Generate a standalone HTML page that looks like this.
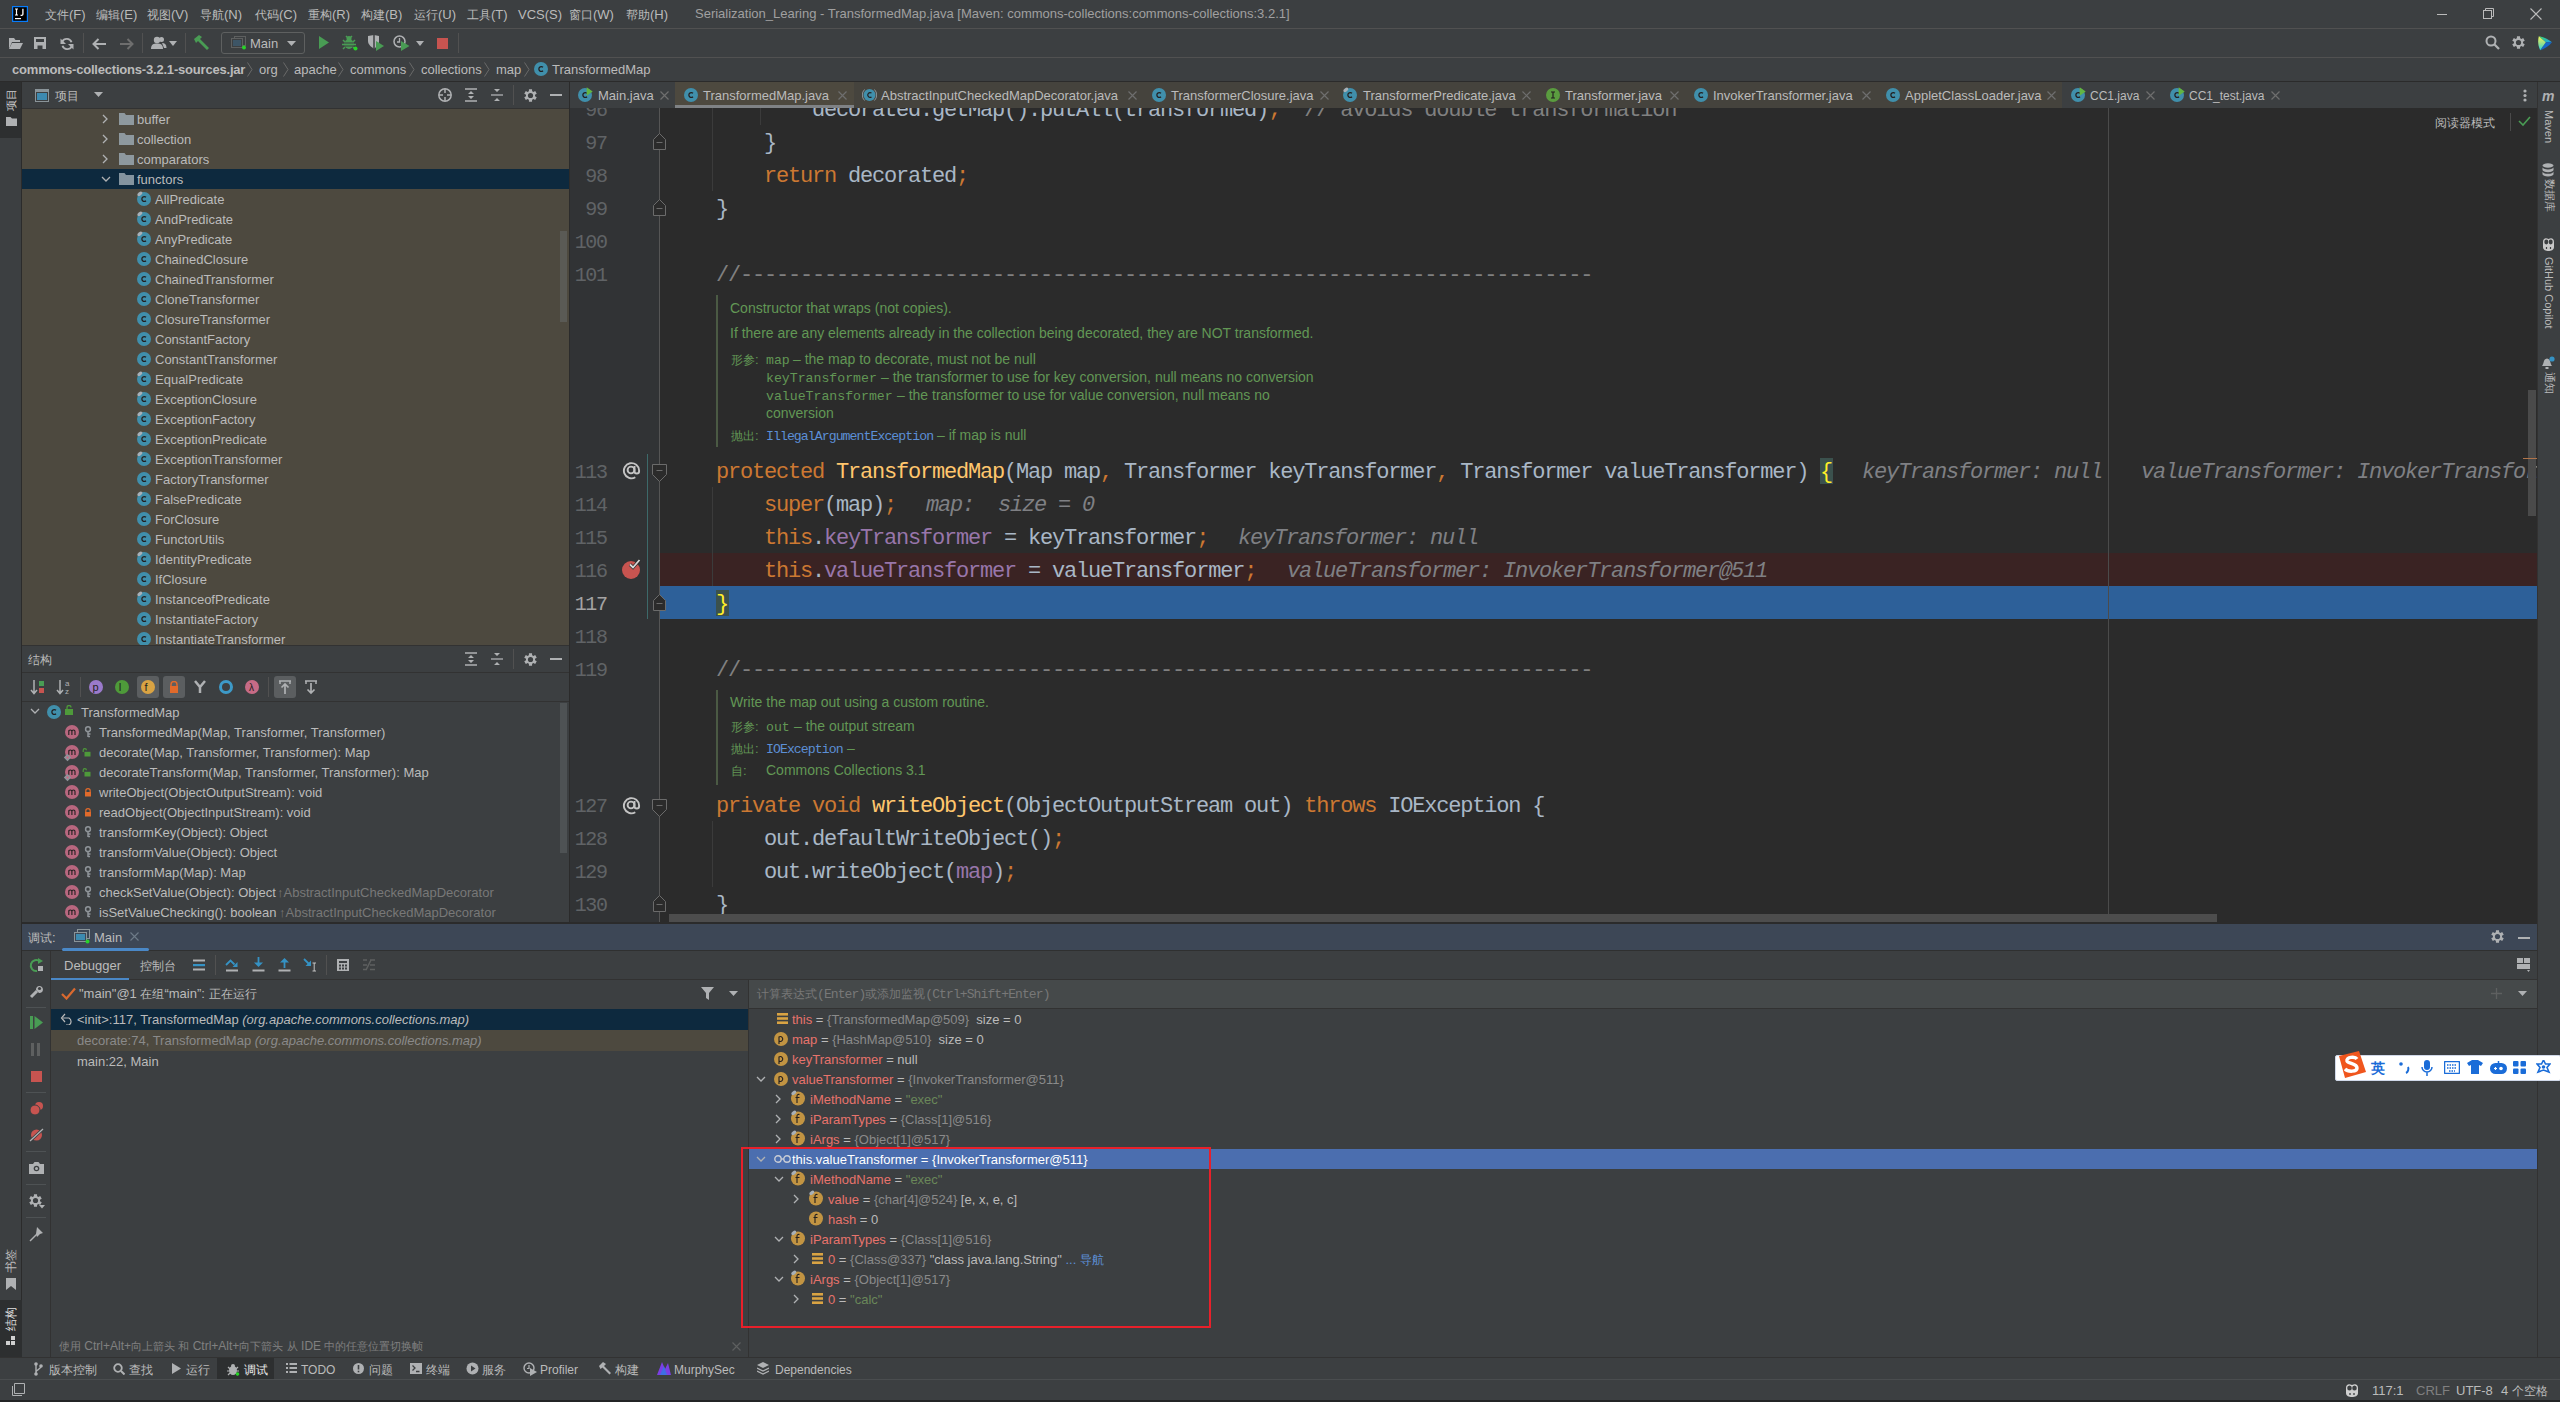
<!DOCTYPE html><html><head><meta charset="utf-8"><style>html,body{margin:0;padding:0;width:2560px;height:1402px;overflow:hidden;background:#3C3F41;}body>div,body>svg{position:absolute;}.t{white-space:pre;}</style></head><body><div style="left:0px;top:0px;width:2560px;height:28px;background:#3C3F41;"></div><div style="left:0px;top:28px;width:2560px;height:1px;background:#515151;"></div><svg style="left:12px;top:6px;" width="16" height="16" viewBox="0 0 16 16"><rect x="0.6" y="0.6" width="14.8" height="14.8" fill="#000" stroke="#087CFA" stroke-width="1.2"/><path d="M3 3H6M3 9H6M4.5 3V9" stroke="#FFF" stroke-width="1.2"/><path d="M8.6 9.2C9.6 9.6 10.9 9.3 10.9 8V2.8" fill="none" stroke="#FFF" stroke-width="1.3"/><rect x="3" y="12" width="6" height="1.2" fill="#FFF"/></svg><div class="t" style="left:45px;top:8.00px;font-size:13px;line-height:13px;color:#BBBBBB;font-family:'Liberation Sans', sans-serif;"><span style="font-size:0.923em">文件</span>(F)</div><div class="t" style="left:96px;top:8.00px;font-size:13px;line-height:13px;color:#BBBBBB;font-family:'Liberation Sans', sans-serif;"><span style="font-size:0.923em">编辑</span>(E)</div><div class="t" style="left:147px;top:8.00px;font-size:13px;line-height:13px;color:#BBBBBB;font-family:'Liberation Sans', sans-serif;"><span style="font-size:0.923em">视图</span>(V)</div><div class="t" style="left:200px;top:8.00px;font-size:13px;line-height:13px;color:#BBBBBB;font-family:'Liberation Sans', sans-serif;"><span style="font-size:0.923em">导航</span>(N)</div><div class="t" style="left:255px;top:8.00px;font-size:13px;line-height:13px;color:#BBBBBB;font-family:'Liberation Sans', sans-serif;"><span style="font-size:0.923em">代码</span>(C)</div><div class="t" style="left:308px;top:8.00px;font-size:13px;line-height:13px;color:#BBBBBB;font-family:'Liberation Sans', sans-serif;"><span style="font-size:0.923em">重构</span>(R)</div><div class="t" style="left:361px;top:8.00px;font-size:13px;line-height:13px;color:#BBBBBB;font-family:'Liberation Sans', sans-serif;"><span style="font-size:0.923em">构建</span>(B)</div><div class="t" style="left:414px;top:8.00px;font-size:13px;line-height:13px;color:#BBBBBB;font-family:'Liberation Sans', sans-serif;"><span style="font-size:0.923em">运行</span>(U)</div><div class="t" style="left:467px;top:8.00px;font-size:13px;line-height:13px;color:#BBBBBB;font-family:'Liberation Sans', sans-serif;"><span style="font-size:0.923em">工具</span>(T)</div><div class="t" style="left:518px;top:8.00px;font-size:13px;line-height:13px;color:#BBBBBB;font-family:'Liberation Sans', sans-serif;">VCS(S)</div><div class="t" style="left:569px;top:8.00px;font-size:13px;line-height:13px;color:#BBBBBB;font-family:'Liberation Sans', sans-serif;"><span style="font-size:0.923em">窗口</span>(W)</div><div class="t" style="left:626px;top:8.00px;font-size:13px;line-height:13px;color:#BBBBBB;font-family:'Liberation Sans', sans-serif;"><span style="font-size:0.923em">帮助</span>(H)</div><div class="t" style="left:695px;top:7.00px;font-size:13px;line-height:13px;color:#A0A0A0;font-family:'Liberation Sans', sans-serif;">Serialization_Learing - TransformedMap.java [Maven: commons-collections:commons-collections:3.2.1]</div><div style="left:2437px;top:14px;width:10px;height:1px;background:#BBBBBB;"></div><svg style="left:2483px;top:8px;" width="12" height="12" viewBox="0 0 12 12"><rect x="0.5" y="2.5" width="8" height="8" fill="none" stroke="#BBBBBB"/><path d="M2.5 2.5V0.5H10.5V8.5H8.5" fill="none" stroke="#BBBBBB"/></svg><svg style="left:2530px;top:8px;" width="12" height="12" viewBox="0 0 12 12"><path d="M0.5 0.5L11.5 11.5M11.5 0.5L0.5 11.5" stroke="#BBBBBB" stroke-width="1.1"/></svg><div style="left:0px;top:29px;width:2560px;height:28px;background:#3C3F41;"></div><div style="left:0px;top:57px;width:2560px;height:1px;background:#515151;"></div><svg style="left:8px;top:37px;" width="16" height="13" viewBox="0 0 16 13"><path d="M1 1H6L7.5 3H12V5H4L1 12Z" fill="#AFB1B3"/><path d="M4 6H15L12 12H1Z" fill="#AFB1B3"/></svg><svg style="left:34px;top:37px;" width="13" height="13" viewBox="0 0 13 13"><path d="M0 0H12V12H0Z M2 2V5H10V2Z M3.5 8.5V12H8.5V8.5Z" fill="#AFB1B3" fill-rule="evenodd"/></svg><svg style="left:60px;top:37px;" width="14" height="14" viewBox="0 0 14 14"><path d="M11.5 5.2A5 5 0 0 0 2.3 4.6" fill="none" stroke="#AFB1B3" stroke-width="1.9"/><path d="M2.5 8.8A5 5 0 0 0 11.7 9.4" fill="none" stroke="#AFB1B3" stroke-width="1.9"/><path d="M0.5 1.5V7H6Z" fill="#AFB1B3"/><path d="M13.5 12.5V7H8Z" fill="#AFB1B3"/></svg><div style="left:83px;top:33px;width:1px;height:20px;background:#515151;"></div><svg style="left:92px;top:38px;" width="15" height="12" viewBox="0 0 15 12"><path d="M1.5 6H14M6.5 1L1.5 6L6.5 11" fill="none" stroke="#AFB1B3" stroke-width="2"/></svg><svg style="left:119px;top:38px;" width="15" height="12" viewBox="0 0 15 12"><path d="M13.5 6H1M8.5 1L13.5 6L8.5 11" fill="none" stroke="#6E6E6E" stroke-width="2"/></svg><div style="left:142px;top:33px;width:1px;height:20px;background:#515151;"></div><svg style="left:151px;top:36px;" width="16" height="14" viewBox="0 0 16 14"><circle cx="6" cy="4" r="3.2" fill="#AFB1B3"/><path d="M0 13C0 8.5 2.5 7.5 6 7.5C9.5 7.5 12 8.5 12 13Z" fill="#AFB1B3"/><circle cx="10.5" cy="3.5" r="2.5" fill="#AFB1B3"/><path d="M11 7C14 7 15.5 8.5 15.5 12L13 12Z" fill="#AFB1B3"/></svg><svg style="left:169px;top:41px;" width="8" height="5" viewBox="0 0 8 5"><path d="M0 0H8L4 5Z" fill="#AFB1B3"/></svg><div style="left:185px;top:33px;width:1px;height:20px;background:#515151;"></div><svg style="left:193px;top:35px;" width="17" height="15" viewBox="0 0 17 15"><path d="M1 4L6 0L9 2L7 4L16 13L14 15L5 6L3 8Z" fill="#499C54"/></svg><div style="left:221px;top:32px;width:82px;height:20px;border:1px solid #5E6060;border-radius:3px;"></div><svg style="left:231px;top:36px;" width="16" height="14" viewBox="0 0 16 14"><rect x="3.5" y="0.5" width="11" height="9" fill="none" stroke="#5E6060"/><rect x="0.5" y="2.5" width="11" height="9" fill="#3C3F41" stroke="#5E6060"/><rect x="2" y="4" width="8" height="6" fill="#3D5566"/><circle cx="13" cy="11.5" r="2" fill="#28D228"/></svg><div class="t" style="left:250px;top:37.00px;font-size:13px;line-height:13px;color:#BBBBBB;font-family:'Liberation Sans', sans-serif;">Main</div><svg style="left:287px;top:41px;" width="9" height="5" viewBox="0 0 9 5"><path d="M0 0H9L4.5 5Z" fill="#AFB1B3"/></svg><svg style="left:319px;top:36px;" width="10" height="13" viewBox="0 0 10 13"><path d="M0 0L10 6.5L0 13Z" fill="#499C54"/></svg><svg style="left:342px;top:35px;" width="16" height="16" viewBox="0 0 16 16"><ellipse cx="7" cy="9" rx="4.5" ry="5" fill="#499C54"/><circle cx="7" cy="3.5" r="2.5" fill="#499C54"/><path d="M1 5L3 7M13 5L11 7M0 9.5H3M11 9.5H14M1 14L3 12M13 14L11 12M4 1L5.5 2.5M10 1L8.5 2.5" stroke="#499C54" stroke-width="1.5"/><path d="M3 8H11M3 11H11" stroke="#3C3F41" stroke-width="1"/><circle cx="13.5" cy="13.5" r="2" fill="#28D228"/></svg><svg style="left:367px;top:35px;" width="17" height="16" viewBox="0 0 17 16"><path d="M1 1L7 0L12 1V6C12 10 9 12.5 7 13.5C5 12.5 1 10 1 6Z" fill="#AFB1B3"/><path d="M7 0V13.5" stroke="#3C3F41" stroke-width="1.5"/><path d="M9 6L17 11L9 16Z" fill="#499C54"/></svg><svg style="left:393px;top:35px;" width="17" height="16" viewBox="0 0 17 16"><circle cx="6.5" cy="6.5" r="5.5" fill="none" stroke="#AFB1B3" stroke-width="1.5"/><path d="M6.5 3V7H4" fill="none" stroke="#AFB1B3" stroke-width="1.3"/><path d="M8 6L16.5 11L8 16Z" fill="#499C54"/></svg><svg style="left:416px;top:41px;" width="8" height="5" viewBox="0 0 8 5"><path d="M0 0H8L4 5Z" fill="#AFB1B3"/></svg><div style="left:437px;top:38px;width:11px;height:11px;background:#C75450;"></div><div style="left:458px;top:33px;width:1px;height:20px;background:#515151;"></div><svg style="left:2485px;top:35px;" width="16" height="16" viewBox="0 0 16 16"><circle cx="6" cy="6" r="4.5" fill="none" stroke="#AFB1B3" stroke-width="2"/><path d="M9.5 9.5L14 14" stroke="#AFB1B3" stroke-width="2.3"/></svg><svg style="left:2512px;top:36px;" width="13" height="13" viewBox="0 0 13 13"><path d="M8.10 10.76 L8.05 12.81 L4.95 12.81 L4.90 10.76 L3.61 10.02 L1.80 10.99 L0.26 8.32 L2.01 7.24 L2.01 5.76 L0.26 4.68 L1.80 2.01 L3.61 2.98 L4.90 2.24 L4.95 0.19 L8.05 0.19 L8.10 2.24 L9.39 2.98 L11.20 2.01 L12.74 4.68 L10.99 5.76 L10.99 7.24 L12.74 8.32 L11.20 10.99 L9.39 10.02Z" fill="#AFB1B3"/><circle cx="6.5" cy="6.5" r="4.03" fill="#AFB1B3"/><circle cx="6.5" cy="6.5" r="2.60" fill="#3C3F41"/></svg><svg style="left:2538px;top:36px;" width="15" height="15" viewBox="0 0 15 15"><defs><linearGradient id="jbl" x1="0" y1="0" x2="0" y2="1"><stop offset="0" stop-color="#F4F65A"/><stop offset="0.5" stop-color="#9BE28A"/><stop offset="1" stop-color="#27D3E0"/></linearGradient><linearGradient id="jbt" x1="0" y1="0" x2="1" y2="1"><stop offset="0" stop-color="#3DDC6A"/><stop offset="1" stop-color="#1A9AE8"/></linearGradient></defs><path d="M0.8 0.3C5 0.8 10 3 14 6.3L7.8 6.3Z" fill="url(#jbt)"/><path d="M7.8 6.3L14 6.3C11 10 6 13 2.2 14.2Z" fill="#1668C8"/><path d="M0.8 0.3L7.8 6.3L2.2 14.2C0 10 -0.3 5 0.8 0.3Z" fill="url(#jbl)"/></svg><div style="left:0px;top:58px;width:2560px;height:23px;background:#3C3F41;"></div><div style="left:0px;top:81px;width:2560px;height:1px;background:#2B2B2B;"></div><div class="t" style="left:12px;top:63.00px;font-size:13px;line-height:13px;color:#BBBBBB;font-family:'Liberation Sans', sans-serif;font-weight:bold;letter-spacing:-0.2px;">commons-collections-3.2.1-sources.jar</div><svg style="left:247px;top:62px;" width="6" height="15" viewBox="0 0 6 15"><path d="M0.5 0.5L5 7.5L0.5 14.5" fill="none" stroke="#6A6A6A"/></svg><div class="t" style="left:259px;top:63.00px;font-size:13px;line-height:13px;color:#BBBBBB;font-family:'Liberation Sans', sans-serif;">org</div><div class="t" style="left:294px;top:63.00px;font-size:13px;line-height:13px;color:#BBBBBB;font-family:'Liberation Sans', sans-serif;">apache</div><div class="t" style="left:350px;top:63.00px;font-size:13px;line-height:13px;color:#BBBBBB;font-family:'Liberation Sans', sans-serif;">commons</div><div class="t" style="left:421px;top:63.00px;font-size:13px;line-height:13px;color:#BBBBBB;font-family:'Liberation Sans', sans-serif;">collections</div><div class="t" style="left:496px;top:63.00px;font-size:13px;line-height:13px;color:#BBBBBB;font-family:'Liberation Sans', sans-serif;">map</div><svg style="left:283px;top:62px;" width="6" height="15" viewBox="0 0 6 15"><path d="M0.5 0.5L5 7.5L0.5 14.5" fill="none" stroke="#6A6A6A"/></svg><svg style="left:338px;top:62px;" width="6" height="15" viewBox="0 0 6 15"><path d="M0.5 0.5L5 7.5L0.5 14.5" fill="none" stroke="#6A6A6A"/></svg><svg style="left:409px;top:62px;" width="6" height="15" viewBox="0 0 6 15"><path d="M0.5 0.5L5 7.5L0.5 14.5" fill="none" stroke="#6A6A6A"/></svg><svg style="left:484px;top:62px;" width="6" height="15" viewBox="0 0 6 15"><path d="M0.5 0.5L5 7.5L0.5 14.5" fill="none" stroke="#6A6A6A"/></svg><svg style="left:524px;top:62px;" width="6" height="15" viewBox="0 0 6 15"><path d="M0.5 0.5L5 7.5L0.5 14.5" fill="none" stroke="#6A6A6A"/></svg><svg style="left:534px;top:62px;overflow:visible;" width="16" height="14" viewBox="0 0 16 14"><circle cx="7.0" cy="7.0" r="7.0" fill="#408FAB"/><path d="M8.96 5.32A2.38 2.38 0 1 0 8.96 8.68" fill="none" stroke="#231F20" stroke-width="1.3"/></svg><div class="t" style="left:552px;top:63.00px;font-size:13px;line-height:13px;color:#BBBBBB;font-family:'Liberation Sans', sans-serif;">TransformedMap</div><div style="left:0px;top:82px;width:22px;height:1300px;background:#3C3F41;"></div><div style="left:21px;top:82px;width:1px;height:1276px;background:#2B2B2B;"></div><div style="left:0px;top:82px;width:21px;height:56px;background:#2D2F30;"></div><div class="t" style="left:4px;top:-10.16px;font-size:12px;line-height:12px;color:#D0D0D0;font-family:'Liberation Sans', sans-serif;transform:rotate(-90deg);transform-origin:0 0;top:111px;left:5px;"><span style="font-size:0.923em">项目</span></div><svg style="left:6px;top:117px;" width="12" height="9" viewBox="0 0 12 9"><path d="M0 0H4.5L6 1.5H11V9H0Z" fill="#AFB1B3"/></svg><div style="left:22px;top:82px;width:547px;height:26px;background:#3C3F41;"></div><div style="left:22px;top:108px;width:547px;height:1px;background:#323232;"></div><svg style="left:35px;top:89px;" width="14" height="13" viewBox="0 0 14 13"><rect x="0.5" y="0.5" width="13" height="12" fill="none" stroke="#8A9499"/><rect x="0" y="0" width="14" height="3" fill="#8A9499"/><rect x="2" y="4" width="10" height="7" fill="#3D8AB0"/></svg><div class="t" style="left:55px;top:89.00px;font-size:13px;line-height:13px;color:#BBBBBB;font-family:'Liberation Sans', sans-serif;"><span style="font-size:0.923em">项目</span></div><svg style="left:94px;top:92px;" width="9" height="6" viewBox="0 0 9 6"><path d="M0 0H9L4.5 5Z" fill="#AFB1B3"/></svg><svg style="left:438px;top:88px;" width="14" height="14" viewBox="0 0 14 14"><circle cx="7" cy="7" r="6.2" fill="none" stroke="#AFB1B3" stroke-width="1.5"/><path d="M7 1V5M7 9V13M1 7H5M9 7H13" stroke="#AFB1B3" stroke-width="1.5"/></svg><svg style="left:465px;top:88px;" width="13" height="14" viewBox="0 0 13 14"><path d="M0 1H12M0 13H12" stroke="#AFB1B3" stroke-width="1.3"/><path d="M3 6L6 3L9 6Z M3 8L6 11L9 8Z" fill="#AFB1B3"/></svg><svg style="left:491px;top:88px;" width="13" height="14" viewBox="0 0 13 14"><path d="M0 7H12" stroke="#AFB1B3" stroke-width="1.3"/><path d="M3 1H9L6 4Z M3 13H9L6 10Z" fill="#AFB1B3"/></svg><div style="left:513px;top:85px;width:1px;height:20px;background:#515151;"></div><svg style="left:524px;top:89px;" width="13" height="13" viewBox="0 0 13 13"><path d="M8.10 10.76 L8.05 12.81 L4.95 12.81 L4.90 10.76 L3.61 10.02 L1.80 10.99 L0.26 8.32 L2.01 7.24 L2.01 5.76 L0.26 4.68 L1.80 2.01 L3.61 2.98 L4.90 2.24 L4.95 0.19 L8.05 0.19 L8.10 2.24 L9.39 2.98 L11.20 2.01 L12.74 4.68 L10.99 5.76 L10.99 7.24 L12.74 8.32 L11.20 10.99 L9.39 10.02Z" fill="#AFB1B3"/><circle cx="6.5" cy="6.5" r="4.03" fill="#AFB1B3"/><circle cx="6.5" cy="6.5" r="2.60" fill="#3C3F41"/></svg><div style="left:550px;top:94px;width:12px;height:2px;background:#AFB1B3;"></div><div style="left:569px;top:82px;width:1px;height:841px;background:#2B2B2B;"></div><div style="left:22px;top:109px;width:547px;height:536px;background:#4D493F;"></div><svg style="left:102px;top:114px;" width="7" height="10" viewBox="0 0 7 10"><path d="M1 1L5 5L1 9" fill="none" stroke="#AFB1B3" stroke-width="1.3"/></svg><svg style="left:119px;top:113px;" width="15" height="12" viewBox="0 0 15 12"><path d="M0 0H5.5L7 2H15V12H0Z" fill="#9AA7B0" opacity="0.85"/></svg><div class="t" style="left:137px;top:113.00px;font-size:13px;line-height:13px;color:#BBBBBB;font-family:'Liberation Sans', sans-serif;">buffer</div><svg style="left:102px;top:134px;" width="7" height="10" viewBox="0 0 7 10"><path d="M1 1L5 5L1 9" fill="none" stroke="#AFB1B3" stroke-width="1.3"/></svg><svg style="left:119px;top:133px;" width="15" height="12" viewBox="0 0 15 12"><path d="M0 0H5.5L7 2H15V12H0Z" fill="#9AA7B0" opacity="0.85"/></svg><div class="t" style="left:137px;top:133.00px;font-size:13px;line-height:13px;color:#BBBBBB;font-family:'Liberation Sans', sans-serif;">collection</div><svg style="left:102px;top:154px;" width="7" height="10" viewBox="0 0 7 10"><path d="M1 1L5 5L1 9" fill="none" stroke="#AFB1B3" stroke-width="1.3"/></svg><svg style="left:119px;top:153px;" width="15" height="12" viewBox="0 0 15 12"><path d="M0 0H5.5L7 2H15V12H0Z" fill="#9AA7B0" opacity="0.85"/></svg><div class="t" style="left:137px;top:153.00px;font-size:13px;line-height:13px;color:#BBBBBB;font-family:'Liberation Sans', sans-serif;">comparators</div><div style="left:22px;top:169px;width:547px;height:20px;background:#0D293E;"></div><svg style="left:101px;top:176px;" width="10" height="7" viewBox="0 0 10 7"><path d="M1 1L5 5L9 1" fill="none" stroke="#AFB1B3" stroke-width="1.3"/></svg><svg style="left:119px;top:173px;" width="15" height="12" viewBox="0 0 15 12"><path d="M0 0H5.5L7 2H15V12H0Z" fill="#9AA7B0" opacity="0.85"/></svg><div class="t" style="left:137px;top:173.00px;font-size:13px;line-height:13px;color:#BBBBBB;font-family:'Liberation Sans', sans-serif;">functors</div><div style="left:22px;top:109px;width:547px;height:536px;overflow:hidden;"><svg style="position:absolute;left:115px;top:83px;overflow:visible;" width="16" height="14" viewBox="0 0 16 14"><circle cx="7.0" cy="7.0" r="7.0" fill="#408FAB"/><path d="M8.96 5.32A2.38 2.38 0 1 0 8.96 8.68" fill="none" stroke="#231F20" stroke-width="1.3"/><ellipse cx="2.80" cy="1.82" rx="2.80" ry="1.68" transform="rotate(-35 2.80 1.82)" fill="#A7B0B8"/></svg><div class="t" style="position:absolute;left:133px;top:84.00px;font-size:13px;line-height:13px;color:#BBBBBB;font-family:'Liberation Sans',sans-serif;">AllPredicate</div><svg style="position:absolute;left:115px;top:103px;overflow:visible;" width="16" height="14" viewBox="0 0 16 14"><circle cx="7.0" cy="7.0" r="7.0" fill="#408FAB"/><path d="M8.96 5.32A2.38 2.38 0 1 0 8.96 8.68" fill="none" stroke="#231F20" stroke-width="1.3"/><ellipse cx="2.80" cy="1.82" rx="2.80" ry="1.68" transform="rotate(-35 2.80 1.82)" fill="#A7B0B8"/></svg><div class="t" style="position:absolute;left:133px;top:104.00px;font-size:13px;line-height:13px;color:#BBBBBB;font-family:'Liberation Sans',sans-serif;">AndPredicate</div><svg style="position:absolute;left:115px;top:123px;overflow:visible;" width="16" height="14" viewBox="0 0 16 14"><circle cx="7.0" cy="7.0" r="7.0" fill="#408FAB"/><path d="M8.96 5.32A2.38 2.38 0 1 0 8.96 8.68" fill="none" stroke="#231F20" stroke-width="1.3"/><ellipse cx="2.80" cy="1.82" rx="2.80" ry="1.68" transform="rotate(-35 2.80 1.82)" fill="#A7B0B8"/></svg><div class="t" style="position:absolute;left:133px;top:124.00px;font-size:13px;line-height:13px;color:#BBBBBB;font-family:'Liberation Sans',sans-serif;">AnyPredicate</div><svg style="position:absolute;left:115px;top:143px;overflow:visible;" width="16" height="14" viewBox="0 0 16 14"><circle cx="7.0" cy="7.0" r="7.0" fill="#408FAB"/><path d="M8.96 5.32A2.38 2.38 0 1 0 8.96 8.68" fill="none" stroke="#231F20" stroke-width="1.3"/></svg><div class="t" style="position:absolute;left:133px;top:144.00px;font-size:13px;line-height:13px;color:#BBBBBB;font-family:'Liberation Sans',sans-serif;">ChainedClosure</div><svg style="position:absolute;left:115px;top:163px;overflow:visible;" width="16" height="14" viewBox="0 0 16 14"><circle cx="7.0" cy="7.0" r="7.0" fill="#408FAB"/><path d="M8.96 5.32A2.38 2.38 0 1 0 8.96 8.68" fill="none" stroke="#231F20" stroke-width="1.3"/></svg><div class="t" style="position:absolute;left:133px;top:164.00px;font-size:13px;line-height:13px;color:#BBBBBB;font-family:'Liberation Sans',sans-serif;">ChainedTransformer</div><svg style="position:absolute;left:115px;top:183px;overflow:visible;" width="16" height="14" viewBox="0 0 16 14"><circle cx="7.0" cy="7.0" r="7.0" fill="#408FAB"/><path d="M8.96 5.32A2.38 2.38 0 1 0 8.96 8.68" fill="none" stroke="#231F20" stroke-width="1.3"/></svg><div class="t" style="position:absolute;left:133px;top:184.00px;font-size:13px;line-height:13px;color:#BBBBBB;font-family:'Liberation Sans',sans-serif;">CloneTransformer</div><svg style="position:absolute;left:115px;top:203px;overflow:visible;" width="16" height="14" viewBox="0 0 16 14"><circle cx="7.0" cy="7.0" r="7.0" fill="#408FAB"/><path d="M8.96 5.32A2.38 2.38 0 1 0 8.96 8.68" fill="none" stroke="#231F20" stroke-width="1.3"/></svg><div class="t" style="position:absolute;left:133px;top:204.00px;font-size:13px;line-height:13px;color:#BBBBBB;font-family:'Liberation Sans',sans-serif;">ClosureTransformer</div><svg style="position:absolute;left:115px;top:223px;overflow:visible;" width="16" height="14" viewBox="0 0 16 14"><circle cx="7.0" cy="7.0" r="7.0" fill="#408FAB"/><path d="M8.96 5.32A2.38 2.38 0 1 0 8.96 8.68" fill="none" stroke="#231F20" stroke-width="1.3"/></svg><div class="t" style="position:absolute;left:133px;top:224.00px;font-size:13px;line-height:13px;color:#BBBBBB;font-family:'Liberation Sans',sans-serif;">ConstantFactory</div><svg style="position:absolute;left:115px;top:243px;overflow:visible;" width="16" height="14" viewBox="0 0 16 14"><circle cx="7.0" cy="7.0" r="7.0" fill="#408FAB"/><path d="M8.96 5.32A2.38 2.38 0 1 0 8.96 8.68" fill="none" stroke="#231F20" stroke-width="1.3"/></svg><div class="t" style="position:absolute;left:133px;top:244.00px;font-size:13px;line-height:13px;color:#BBBBBB;font-family:'Liberation Sans',sans-serif;">ConstantTransformer</div><svg style="position:absolute;left:115px;top:263px;overflow:visible;" width="16" height="14" viewBox="0 0 16 14"><circle cx="7.0" cy="7.0" r="7.0" fill="#408FAB"/><path d="M8.96 5.32A2.38 2.38 0 1 0 8.96 8.68" fill="none" stroke="#231F20" stroke-width="1.3"/><ellipse cx="2.80" cy="1.82" rx="2.80" ry="1.68" transform="rotate(-35 2.80 1.82)" fill="#A7B0B8"/></svg><div class="t" style="position:absolute;left:133px;top:264.00px;font-size:13px;line-height:13px;color:#BBBBBB;font-family:'Liberation Sans',sans-serif;">EqualPredicate</div><svg style="position:absolute;left:115px;top:283px;overflow:visible;" width="16" height="14" viewBox="0 0 16 14"><circle cx="7.0" cy="7.0" r="7.0" fill="#408FAB"/><path d="M8.96 5.32A2.38 2.38 0 1 0 8.96 8.68" fill="none" stroke="#231F20" stroke-width="1.3"/><ellipse cx="2.80" cy="1.82" rx="2.80" ry="1.68" transform="rotate(-35 2.80 1.82)" fill="#A7B0B8"/></svg><div class="t" style="position:absolute;left:133px;top:284.00px;font-size:13px;line-height:13px;color:#BBBBBB;font-family:'Liberation Sans',sans-serif;">ExceptionClosure</div><svg style="position:absolute;left:115px;top:303px;overflow:visible;" width="16" height="14" viewBox="0 0 16 14"><circle cx="7.0" cy="7.0" r="7.0" fill="#408FAB"/><path d="M8.96 5.32A2.38 2.38 0 1 0 8.96 8.68" fill="none" stroke="#231F20" stroke-width="1.3"/><ellipse cx="2.80" cy="1.82" rx="2.80" ry="1.68" transform="rotate(-35 2.80 1.82)" fill="#A7B0B8"/></svg><div class="t" style="position:absolute;left:133px;top:304.00px;font-size:13px;line-height:13px;color:#BBBBBB;font-family:'Liberation Sans',sans-serif;">ExceptionFactory</div><svg style="position:absolute;left:115px;top:323px;overflow:visible;" width="16" height="14" viewBox="0 0 16 14"><circle cx="7.0" cy="7.0" r="7.0" fill="#408FAB"/><path d="M8.96 5.32A2.38 2.38 0 1 0 8.96 8.68" fill="none" stroke="#231F20" stroke-width="1.3"/><ellipse cx="2.80" cy="1.82" rx="2.80" ry="1.68" transform="rotate(-35 2.80 1.82)" fill="#A7B0B8"/></svg><div class="t" style="position:absolute;left:133px;top:324.00px;font-size:13px;line-height:13px;color:#BBBBBB;font-family:'Liberation Sans',sans-serif;">ExceptionPredicate</div><svg style="position:absolute;left:115px;top:343px;overflow:visible;" width="16" height="14" viewBox="0 0 16 14"><circle cx="7.0" cy="7.0" r="7.0" fill="#408FAB"/><path d="M8.96 5.32A2.38 2.38 0 1 0 8.96 8.68" fill="none" stroke="#231F20" stroke-width="1.3"/><ellipse cx="2.80" cy="1.82" rx="2.80" ry="1.68" transform="rotate(-35 2.80 1.82)" fill="#A7B0B8"/></svg><div class="t" style="position:absolute;left:133px;top:344.00px;font-size:13px;line-height:13px;color:#BBBBBB;font-family:'Liberation Sans',sans-serif;">ExceptionTransformer</div><svg style="position:absolute;left:115px;top:363px;overflow:visible;" width="16" height="14" viewBox="0 0 16 14"><circle cx="7.0" cy="7.0" r="7.0" fill="#408FAB"/><path d="M8.96 5.32A2.38 2.38 0 1 0 8.96 8.68" fill="none" stroke="#231F20" stroke-width="1.3"/></svg><div class="t" style="position:absolute;left:133px;top:364.00px;font-size:13px;line-height:13px;color:#BBBBBB;font-family:'Liberation Sans',sans-serif;">FactoryTransformer</div><svg style="position:absolute;left:115px;top:383px;overflow:visible;" width="16" height="14" viewBox="0 0 16 14"><circle cx="7.0" cy="7.0" r="7.0" fill="#408FAB"/><path d="M8.96 5.32A2.38 2.38 0 1 0 8.96 8.68" fill="none" stroke="#231F20" stroke-width="1.3"/><ellipse cx="2.80" cy="1.82" rx="2.80" ry="1.68" transform="rotate(-35 2.80 1.82)" fill="#A7B0B8"/></svg><div class="t" style="position:absolute;left:133px;top:384.00px;font-size:13px;line-height:13px;color:#BBBBBB;font-family:'Liberation Sans',sans-serif;">FalsePredicate</div><svg style="position:absolute;left:115px;top:403px;overflow:visible;" width="16" height="14" viewBox="0 0 16 14"><circle cx="7.0" cy="7.0" r="7.0" fill="#408FAB"/><path d="M8.96 5.32A2.38 2.38 0 1 0 8.96 8.68" fill="none" stroke="#231F20" stroke-width="1.3"/></svg><div class="t" style="position:absolute;left:133px;top:404.00px;font-size:13px;line-height:13px;color:#BBBBBB;font-family:'Liberation Sans',sans-serif;">ForClosure</div><svg style="position:absolute;left:115px;top:423px;overflow:visible;" width="16" height="14" viewBox="0 0 16 14"><circle cx="7.0" cy="7.0" r="7.0" fill="#408FAB"/><path d="M8.96 5.32A2.38 2.38 0 1 0 8.96 8.68" fill="none" stroke="#231F20" stroke-width="1.3"/></svg><div class="t" style="position:absolute;left:133px;top:424.00px;font-size:13px;line-height:13px;color:#BBBBBB;font-family:'Liberation Sans',sans-serif;">FunctorUtils</div><svg style="position:absolute;left:115px;top:443px;overflow:visible;" width="16" height="14" viewBox="0 0 16 14"><circle cx="7.0" cy="7.0" r="7.0" fill="#408FAB"/><path d="M8.96 5.32A2.38 2.38 0 1 0 8.96 8.68" fill="none" stroke="#231F20" stroke-width="1.3"/><ellipse cx="2.80" cy="1.82" rx="2.80" ry="1.68" transform="rotate(-35 2.80 1.82)" fill="#A7B0B8"/></svg><div class="t" style="position:absolute;left:133px;top:444.00px;font-size:13px;line-height:13px;color:#BBBBBB;font-family:'Liberation Sans',sans-serif;">IdentityPredicate</div><svg style="position:absolute;left:115px;top:463px;overflow:visible;" width="16" height="14" viewBox="0 0 16 14"><circle cx="7.0" cy="7.0" r="7.0" fill="#408FAB"/><path d="M8.96 5.32A2.38 2.38 0 1 0 8.96 8.68" fill="none" stroke="#231F20" stroke-width="1.3"/></svg><div class="t" style="position:absolute;left:133px;top:464.00px;font-size:13px;line-height:13px;color:#BBBBBB;font-family:'Liberation Sans',sans-serif;">IfClosure</div><svg style="position:absolute;left:115px;top:483px;overflow:visible;" width="16" height="14" viewBox="0 0 16 14"><circle cx="7.0" cy="7.0" r="7.0" fill="#408FAB"/><path d="M8.96 5.32A2.38 2.38 0 1 0 8.96 8.68" fill="none" stroke="#231F20" stroke-width="1.3"/><ellipse cx="2.80" cy="1.82" rx="2.80" ry="1.68" transform="rotate(-35 2.80 1.82)" fill="#A7B0B8"/></svg><div class="t" style="position:absolute;left:133px;top:484.00px;font-size:13px;line-height:13px;color:#BBBBBB;font-family:'Liberation Sans',sans-serif;">InstanceofPredicate</div><svg style="position:absolute;left:115px;top:503px;overflow:visible;" width="16" height="14" viewBox="0 0 16 14"><circle cx="7.0" cy="7.0" r="7.0" fill="#408FAB"/><path d="M8.96 5.32A2.38 2.38 0 1 0 8.96 8.68" fill="none" stroke="#231F20" stroke-width="1.3"/></svg><div class="t" style="position:absolute;left:133px;top:504.00px;font-size:13px;line-height:13px;color:#BBBBBB;font-family:'Liberation Sans',sans-serif;">InstantiateFactory</div><svg style="position:absolute;left:115px;top:523px;overflow:visible;" width="16" height="14" viewBox="0 0 16 14"><circle cx="7.0" cy="7.0" r="7.0" fill="#408FAB"/><path d="M8.96 5.32A2.38 2.38 0 1 0 8.96 8.68" fill="none" stroke="#231F20" stroke-width="1.3"/></svg><div class="t" style="position:absolute;left:133px;top:524.00px;font-size:13px;line-height:13px;color:#BBBBBB;font-family:'Liberation Sans',sans-serif;">InstantiateTransformer</div></div><div style="left:560px;top:231px;width:7px;height:91px;background:#5A5A55;border-radius:0;"></div><div style="left:22px;top:645px;width:547px;height:27px;background:#3C3F41;"></div><div style="left:22px;top:645px;width:547px;height:1px;background:#323232;"></div><div class="t" style="left:28px;top:653.00px;font-size:13px;line-height:13px;color:#BBBBBB;font-family:'Liberation Sans', sans-serif;"><span style="font-size:0.923em">结构</span></div><svg style="left:465px;top:652px;" width="13" height="14" viewBox="0 0 13 14"><path d="M0 1H12M0 13H12" stroke="#AFB1B3" stroke-width="1.3"/><path d="M3 6L6 3L9 6Z M3 8L6 11L9 8Z" fill="#AFB1B3"/></svg><svg style="left:491px;top:652px;" width="13" height="14" viewBox="0 0 13 14"><path d="M0 7H12" stroke="#AFB1B3" stroke-width="1.3"/><path d="M3 1H9L6 4Z M3 13H9L6 10Z" fill="#AFB1B3"/></svg><div style="left:513px;top:649px;width:1px;height:20px;background:#515151;"></div><svg style="left:524px;top:653px;" width="13" height="13" viewBox="0 0 13 13"><path d="M8.10 10.76 L8.05 12.81 L4.95 12.81 L4.90 10.76 L3.61 10.02 L1.80 10.99 L0.26 8.32 L2.01 7.24 L2.01 5.76 L0.26 4.68 L1.80 2.01 L3.61 2.98 L4.90 2.24 L4.95 0.19 L8.05 0.19 L8.10 2.24 L9.39 2.98 L11.20 2.01 L12.74 4.68 L10.99 5.76 L10.99 7.24 L12.74 8.32 L11.20 10.99 L9.39 10.02Z" fill="#AFB1B3"/><circle cx="6.5" cy="6.5" r="4.03" fill="#AFB1B3"/><circle cx="6.5" cy="6.5" r="2.60" fill="#3C3F41"/></svg><div style="left:550px;top:658px;width:12px;height:2px;background:#AFB1B3;"></div><div style="left:22px;top:672px;width:547px;height:29px;background:#3C3F41;"></div><div style="left:22px;top:672px;width:547px;height:1px;background:#323232;"></div><div style="left:137px;top:676px;width:22px;height:22px;background:#5B5E60;border-radius:3px;"></div><div style="left:163px;top:676px;width:22px;height:22px;background:#5B5E60;border-radius:3px;"></div><div style="left:274px;top:676px;width:22px;height:22px;background:#5B5E60;border-radius:3px;"></div><svg style="left:30px;top:680px;" width="16" height="15" viewBox="0 0 16 15"><path d="M4 0V13M1 10L4 13.5L7 10" fill="none" stroke="#AFB1B3" stroke-width="1.5"/><rect x="9" y="1" width="5" height="5" fill="#499C54"/><rect x="9" y="8" width="5" height="5" fill="#C75450"/></svg><svg style="left:56px;top:680px;" width="16" height="15" viewBox="0 0 16 15"><path d="M4 0V13M1 10L4 13.5L7 10" fill="none" stroke="#AFB1B3" stroke-width="1.5"/></svg><div class="t" style="left:65px;top:680.23px;font-size:8px;line-height:8px;color:#AFB1B3;font-family:'Liberation Sans', sans-serif;">a</div><div class="t" style="left:65px;top:688.23px;font-size:8px;line-height:8px;color:#AFB1B3;font-family:'Liberation Sans', sans-serif;">z</div><div style="left:80px;top:677px;width:1px;height:20px;background:#515151;"></div><svg style="left:89px;top:680px;" width="14" height="14" viewBox="0 0 14 14"><circle cx="7" cy="7" r="7" fill="#9B7ACB"/></svg><div class="t" style="left:92.5px;top:681.69px;font-size:11px;line-height:11px;color:#231F20;font-family:'Liberation Sans', sans-serif;">p</div><svg style="left:115px;top:680px;" width="14" height="14" viewBox="0 0 14 14"><circle cx="7" cy="7" r="7" fill="#4E9A3A"/></svg><div class="t" style="left:118.5px;top:681.69px;font-size:11px;line-height:11px;color:#231F20;font-family:'Liberation Sans', sans-serif;">I</div><svg style="left:141px;top:680px;" width="14" height="14" viewBox="0 0 14 14"><circle cx="7" cy="7" r="7" fill="#D9A343"/></svg><div class="t" style="left:144.5px;top:681.69px;font-size:11px;line-height:11px;color:#231F20;font-family:'Liberation Sans', sans-serif;">f</div><svg style="left:169px;top:681px;" width="10" height="12" viewBox="0 0 10 12"><path d="M2 5V3.5A3 3 0 0 1 8 3.5V5" fill="none" stroke="#E06A2B" stroke-width="1.5"/><rect x="1" y="5" width="8" height="7" fill="#E06A2B"/></svg><svg style="left:193px;top:680px;" width="14" height="14" viewBox="0 0 14 14"><path d="M2 1L7 7L12 1M7 7V13" fill="none" stroke="#AFB1B3" stroke-width="2.5"/></svg><svg style="left:219px;top:680px;" width="14" height="14" viewBox="0 0 14 14"><circle cx="7" cy="7" r="5.5" fill="none" stroke="#3D9AC8" stroke-width="3"/></svg><svg style="left:245px;top:680px;" width="14" height="14" viewBox="0 0 14 14"><circle cx="7" cy="7" r="7" fill="#C76B86"/></svg><div class="t" style="left:249px;top:682.53px;font-size:10px;line-height:10px;color:#231F20;font-family:'Liberation Sans', sans-serif;">λ</div><div style="left:268px;top:677px;width:1px;height:20px;background:#515151;"></div><svg style="left:278px;top:680px;" width="14" height="15" viewBox="0 0 14 15"><path d="M1 1H13M2 1V4M12 1V4" fill="none" stroke="#AFB1B3" stroke-width="1.5"/><path d="M7 4V14M3.5 7.5L7 4L10.5 7.5" fill="none" stroke="#AFB1B3" stroke-width="1.7"/></svg><svg style="left:304px;top:680px;" width="14" height="15" viewBox="0 0 14 15"><path d="M1 1H13M2 1V4M12 1V4" fill="none" stroke="#AFB1B3" stroke-width="1.5"/><path d="M7 3V13M3.5 9.5L7 13L10.5 9.5" fill="none" stroke="#AFB1B3" stroke-width="1.7"/></svg><div style="left:22px;top:701px;width:547px;height:222px;background:#3C3F41;"></div><div style="left:22px;top:701px;width:547px;height:1px;background:#323232;"></div><div style="left:22px;top:922px;width:547px;height:1px;background:#2B2B2B;"></div><svg style="left:30px;top:708px;" width="10" height="7" viewBox="0 0 10 7"><path d="M1 1L5 5L9 1" fill="none" stroke="#AFB1B3" stroke-width="1.3"/></svg><svg style="left:47px;top:705px;overflow:visible;" width="16" height="14" viewBox="0 0 16 14"><circle cx="7.0" cy="7.0" r="7.0" fill="#408FAB"/><path d="M8.96 5.32A2.38 2.38 0 1 0 8.96 8.68" fill="none" stroke="#231F20" stroke-width="1.3"/></svg><svg style="left:64px;top:705px;" width="10" height="10" viewBox="0 0 10 10"><path d="M3 4V2.5A2 2 0 0 1 7 2.5" fill="none" stroke="#4E9A3A" stroke-width="1.3"/><rect x="1" y="4" width="8" height="6" fill="#4E9A3A"/></svg><div class="t" style="left:81px;top:706.00px;font-size:13px;line-height:13px;color:#BBBBBB;font-family:'Liberation Sans', sans-serif;">TransformedMap</div><svg style="left:65px;top:725px;" width="14" height="14" viewBox="0 0 14 14"><circle cx="7" cy="7" r="7" fill="#C76B86" opacity="0.9"/><path d="M3.8 10V5.2M3.8 6.5C3.8 4.5 6.9 4.5 6.9 6.5V10M6.9 6.5C6.9 4.5 10 4.5 10 6.5V10" fill="none" stroke="#231F20" stroke-width="1.1"/></svg><svg style="left:84px;top:726px;" width="8" height="12" viewBox="0 0 8 12"><circle cx="4" cy="3.2" r="2.4" fill="none" stroke="#8F9499" stroke-width="1.5"/><path d="M4 5.5V11M4 8H6.5M4 10.5H6" stroke="#8F9499" stroke-width="1.5"/></svg><div class="t" style="left:99px;top:726.00px;font-size:13px;line-height:13px;color:#BBBBBB;font-family:'Liberation Sans', sans-serif;">TransformedMap(Map, Transformer, Transformer)</div><svg style="left:65px;top:745px;" width="14" height="14" viewBox="0 0 14 14"><circle cx="7" cy="7" r="7" fill="#C76B86" opacity="0.9"/><path d="M3.8 10V5.2M3.8 6.5C3.8 4.5 6.9 4.5 6.9 6.5V10M6.9 6.5C6.9 4.5 10 4.5 10 6.5V10" fill="none" stroke="#231F20" stroke-width="1.1"/></svg><svg style="left:82px;top:748px;" width="10" height="9" viewBox="0 0 10 9"><path d="M1.2 4V2.3A1.6 1.6 0 0 1 4.4 2.3" fill="none" stroke="#4E9A3A" stroke-width="1.2"/><rect x="2.5" y="3.8" width="6" height="4.7" fill="#4E9A3A"/></svg><svg style="left:63px;top:753px;" width="9" height="9" viewBox="0 0 9 9"><path d="M4.5 0.8L8.2 4.5L4.5 8.2L0.8 4.5Z" fill="#8E959B"/><path d="M4.5 3L6 4.5L4.5 6L3 4.5Z" fill="#C76B86"/></svg><div class="t" style="left:99px;top:746.00px;font-size:13px;line-height:13px;color:#BBBBBB;font-family:'Liberation Sans', sans-serif;">decorate(Map, Transformer, Transformer): Map</div><svg style="left:65px;top:765px;" width="14" height="14" viewBox="0 0 14 14"><circle cx="7" cy="7" r="7" fill="#C76B86" opacity="0.9"/><path d="M3.8 10V5.2M3.8 6.5C3.8 4.5 6.9 4.5 6.9 6.5V10M6.9 6.5C6.9 4.5 10 4.5 10 6.5V10" fill="none" stroke="#231F20" stroke-width="1.1"/></svg><svg style="left:82px;top:768px;" width="10" height="9" viewBox="0 0 10 9"><path d="M1.2 4V2.3A1.6 1.6 0 0 1 4.4 2.3" fill="none" stroke="#4E9A3A" stroke-width="1.2"/><rect x="2.5" y="3.8" width="6" height="4.7" fill="#4E9A3A"/></svg><svg style="left:63px;top:773px;" width="9" height="9" viewBox="0 0 9 9"><path d="M4.5 0.8L8.2 4.5L4.5 8.2L0.8 4.5Z" fill="#8E959B"/><path d="M4.5 3L6 4.5L4.5 6L3 4.5Z" fill="#C76B86"/></svg><div class="t" style="left:99px;top:766.00px;font-size:13px;line-height:13px;color:#BBBBBB;font-family:'Liberation Sans', sans-serif;">decorateTransform(Map, Transformer, Transformer): Map</div><svg style="left:65px;top:785px;" width="14" height="14" viewBox="0 0 14 14"><circle cx="7" cy="7" r="7" fill="#C76B86" opacity="0.9"/><path d="M3.8 10V5.2M3.8 6.5C3.8 4.5 6.9 4.5 6.9 6.5V10M6.9 6.5C6.9 4.5 10 4.5 10 6.5V10" fill="none" stroke="#231F20" stroke-width="1.1"/></svg><svg style="left:84px;top:788px;" width="8" height="9" viewBox="0 0 8 9"><path d="M1.8 4V2.8A2.2 2.2 0 0 1 6.2 2.8V4" fill="none" stroke="#E06A2B" stroke-width="1.2"/><rect x="1" y="4" width="6" height="4.5" fill="#E06A2B"/></svg><div class="t" style="left:99px;top:786.00px;font-size:13px;line-height:13px;color:#BBBBBB;font-family:'Liberation Sans', sans-serif;">writeObject(ObjectOutputStream): void</div><svg style="left:65px;top:805px;" width="14" height="14" viewBox="0 0 14 14"><circle cx="7" cy="7" r="7" fill="#C76B86" opacity="0.9"/><path d="M3.8 10V5.2M3.8 6.5C3.8 4.5 6.9 4.5 6.9 6.5V10M6.9 6.5C6.9 4.5 10 4.5 10 6.5V10" fill="none" stroke="#231F20" stroke-width="1.1"/></svg><svg style="left:84px;top:808px;" width="8" height="9" viewBox="0 0 8 9"><path d="M1.8 4V2.8A2.2 2.2 0 0 1 6.2 2.8V4" fill="none" stroke="#E06A2B" stroke-width="1.2"/><rect x="1" y="4" width="6" height="4.5" fill="#E06A2B"/></svg><div class="t" style="left:99px;top:806.00px;font-size:13px;line-height:13px;color:#BBBBBB;font-family:'Liberation Sans', sans-serif;">readObject(ObjectInputStream): void</div><svg style="left:65px;top:825px;" width="14" height="14" viewBox="0 0 14 14"><circle cx="7" cy="7" r="7" fill="#C76B86" opacity="0.9"/><path d="M3.8 10V5.2M3.8 6.5C3.8 4.5 6.9 4.5 6.9 6.5V10M6.9 6.5C6.9 4.5 10 4.5 10 6.5V10" fill="none" stroke="#231F20" stroke-width="1.1"/></svg><svg style="left:84px;top:826px;" width="8" height="12" viewBox="0 0 8 12"><circle cx="4" cy="3.2" r="2.4" fill="none" stroke="#8F9499" stroke-width="1.5"/><path d="M4 5.5V11M4 8H6.5M4 10.5H6" stroke="#8F9499" stroke-width="1.5"/></svg><div class="t" style="left:99px;top:826.00px;font-size:13px;line-height:13px;color:#BBBBBB;font-family:'Liberation Sans', sans-serif;">transformKey(Object): Object</div><svg style="left:65px;top:845px;" width="14" height="14" viewBox="0 0 14 14"><circle cx="7" cy="7" r="7" fill="#C76B86" opacity="0.9"/><path d="M3.8 10V5.2M3.8 6.5C3.8 4.5 6.9 4.5 6.9 6.5V10M6.9 6.5C6.9 4.5 10 4.5 10 6.5V10" fill="none" stroke="#231F20" stroke-width="1.1"/></svg><svg style="left:84px;top:846px;" width="8" height="12" viewBox="0 0 8 12"><circle cx="4" cy="3.2" r="2.4" fill="none" stroke="#8F9499" stroke-width="1.5"/><path d="M4 5.5V11M4 8H6.5M4 10.5H6" stroke="#8F9499" stroke-width="1.5"/></svg><div class="t" style="left:99px;top:846.00px;font-size:13px;line-height:13px;color:#BBBBBB;font-family:'Liberation Sans', sans-serif;">transformValue(Object): Object</div><svg style="left:65px;top:865px;" width="14" height="14" viewBox="0 0 14 14"><circle cx="7" cy="7" r="7" fill="#C76B86" opacity="0.9"/><path d="M3.8 10V5.2M3.8 6.5C3.8 4.5 6.9 4.5 6.9 6.5V10M6.9 6.5C6.9 4.5 10 4.5 10 6.5V10" fill="none" stroke="#231F20" stroke-width="1.1"/></svg><svg style="left:84px;top:866px;" width="8" height="12" viewBox="0 0 8 12"><circle cx="4" cy="3.2" r="2.4" fill="none" stroke="#8F9499" stroke-width="1.5"/><path d="M4 5.5V11M4 8H6.5M4 10.5H6" stroke="#8F9499" stroke-width="1.5"/></svg><div class="t" style="left:99px;top:866.00px;font-size:13px;line-height:13px;color:#BBBBBB;font-family:'Liberation Sans', sans-serif;">transformMap(Map): Map</div><svg style="left:65px;top:885px;" width="14" height="14" viewBox="0 0 14 14"><circle cx="7" cy="7" r="7" fill="#C76B86" opacity="0.9"/><path d="M3.8 10V5.2M3.8 6.5C3.8 4.5 6.9 4.5 6.9 6.5V10M6.9 6.5C6.9 4.5 10 4.5 10 6.5V10" fill="none" stroke="#231F20" stroke-width="1.1"/></svg><svg style="left:84px;top:886px;" width="8" height="12" viewBox="0 0 8 12"><circle cx="4" cy="3.2" r="2.4" fill="none" stroke="#8F9499" stroke-width="1.5"/><path d="M4 5.5V11M4 8H6.5M4 10.5H6" stroke="#8F9499" stroke-width="1.5"/></svg><div class="t" style="left:99px;top:886.00px;font-size:13px;line-height:13px;color:#BBBBBB;font-family:'Liberation Sans', sans-serif;">checkSetValue(Object): Object</div><div class="t" style="left:99px;top:0px;visibility:hidden"></div><svg style="left:65px;top:905px;" width="14" height="14" viewBox="0 0 14 14"><circle cx="7" cy="7" r="7" fill="#C76B86" opacity="0.9"/><path d="M3.8 10V5.2M3.8 6.5C3.8 4.5 6.9 4.5 6.9 6.5V10M6.9 6.5C6.9 4.5 10 4.5 10 6.5V10" fill="none" stroke="#231F20" stroke-width="1.1"/></svg><svg style="left:84px;top:906px;" width="8" height="12" viewBox="0 0 8 12"><circle cx="4" cy="3.2" r="2.4" fill="none" stroke="#8F9499" stroke-width="1.5"/><path d="M4 5.5V11M4 8H6.5M4 10.5H6" stroke="#8F9499" stroke-width="1.5"/></svg><div class="t" style="left:99px;top:906.00px;font-size:13px;line-height:13px;color:#BBBBBB;font-family:'Liberation Sans', sans-serif;">isSetValueChecking(): boolean</div><div class="t" style="left:99px;top:0px;visibility:hidden"></div><div class="t" style="left:277px;top:886.00px;font-size:13px;line-height:13px;color:#787878;font-family:'Liberation Sans', sans-serif;">↑AbstractInputCheckedMapDecorator</div><div class="t" style="left:279px;top:906.00px;font-size:13px;line-height:13px;color:#787878;font-family:'Liberation Sans', sans-serif;">↑AbstractInputCheckedMapDecorator</div><div style="left:560px;top:703px;width:7px;height:150px;background:#4E5254;"></div><div style="left:570px;top:82px;width:1967px;height:26px;background:#3C3F41;"></div><div style="left:854px;top:82px;width:1208px;height:26px;background:#45433D;"></div><div style="left:675px;top:82px;width:179px;height:26px;background:#4D493F;"></div><div style="left:675px;top:105px;width:179px;height:3px;background:#7F8285;"></div><svg style="left:578px;top:88px;overflow:visible;" width="16" height="14" viewBox="0 0 16 14"><circle cx="7.0" cy="7.0" r="7.0" fill="#408FAB"/><path d="M8.96 5.32A2.38 2.38 0 1 0 8.96 8.68" fill="none" stroke="#231F20" stroke-width="1.3"/><path d="M8.68 -0.70L14.70 3.50L8.68 7.70Z" fill="#62B543"/></svg><div class="t" style="left:598px;top:89.00px;font-size:13px;line-height:13px;color:#BBBBBB;font-family:'Liberation Sans', sans-serif;">Main.java</div><svg style="left:660px;top:91px;" width="9" height="9" viewBox="0 0 9 9"><path d="M0.5 0.5L8.5 8.5M8.5 0.5L0.5 8.5" stroke="#6E6E6E" stroke-width="1.2"/></svg><svg style="left:684px;top:88px;overflow:visible;" width="16" height="14" viewBox="0 0 16 14"><circle cx="7.0" cy="7.0" r="7.0" fill="#408FAB"/><path d="M8.96 5.32A2.38 2.38 0 1 0 8.96 8.68" fill="none" stroke="#231F20" stroke-width="1.3"/></svg><div class="t" style="left:703px;top:89.00px;font-size:13px;line-height:13px;color:#BBBBBB;font-family:'Liberation Sans', sans-serif;">TransformedMap.java</div><svg style="left:838px;top:91px;" width="9" height="9" viewBox="0 0 9 9"><path d="M0.5 0.5L8.5 8.5M8.5 0.5L0.5 8.5" stroke="#6E6E6E" stroke-width="1.2"/></svg><svg style="left:862px;top:88px;" width="15" height="14" viewBox="0 0 15 14"><circle cx="7.5" cy="7" r="6" fill="#408FAB"/><path d="M2.5 1.5A8 8 0 0 0 2.5 12.5M12.5 1.5A8 8 0 0 1 12.5 12.5" fill="none" stroke="#8A9499" stroke-width="1"/><path d="M9.5 5A2.4 2.4 0 1 0 9.5 9" fill="none" stroke="#231F20" stroke-width="1.2"/></svg><div class="t" style="left:881px;top:89.00px;font-size:13px;line-height:13px;color:#BBBBBB;font-family:'Liberation Sans', sans-serif;">AbstractInputCheckedMapDecorator.java</div><svg style="left:1128px;top:91px;" width="9" height="9" viewBox="0 0 9 9"><path d="M0.5 0.5L8.5 8.5M8.5 0.5L0.5 8.5" stroke="#6E6E6E" stroke-width="1.2"/></svg><svg style="left:1152px;top:88px;overflow:visible;" width="16" height="14" viewBox="0 0 16 14"><circle cx="7.0" cy="7.0" r="7.0" fill="#408FAB"/><path d="M8.96 5.32A2.38 2.38 0 1 0 8.96 8.68" fill="none" stroke="#231F20" stroke-width="1.3"/></svg><div class="t" style="left:1171px;top:89.00px;font-size:13px;line-height:13px;color:#BBBBBB;font-family:'Liberation Sans', sans-serif;">TransformerClosure.java</div><svg style="left:1320px;top:91px;" width="9" height="9" viewBox="0 0 9 9"><path d="M0.5 0.5L8.5 8.5M8.5 0.5L0.5 8.5" stroke="#6E6E6E" stroke-width="1.2"/></svg><svg style="left:1343px;top:88px;overflow:visible;" width="16" height="14" viewBox="0 0 16 14"><circle cx="7.0" cy="7.0" r="7.0" fill="#408FAB"/><path d="M8.96 5.32A2.38 2.38 0 1 0 8.96 8.68" fill="none" stroke="#231F20" stroke-width="1.3"/><ellipse cx="2.80" cy="1.82" rx="2.80" ry="1.68" transform="rotate(-35 2.80 1.82)" fill="#A7B0B8"/></svg><div class="t" style="left:1363px;top:89.00px;font-size:13px;line-height:13px;color:#BBBBBB;font-family:'Liberation Sans', sans-serif;">TransformerPredicate.java</div><svg style="left:1522px;top:91px;" width="9" height="9" viewBox="0 0 9 9"><path d="M0.5 0.5L8.5 8.5M8.5 0.5L0.5 8.5" stroke="#6E6E6E" stroke-width="1.2"/></svg><svg style="left:1546px;top:88px;" width="14" height="14" viewBox="0 0 14 14"><circle cx="7" cy="7" r="7" fill="#5A9C3F"/><path d="M5 4H9M7 4V10M5 10H9" stroke="#231F20" stroke-width="1.2"/></svg><div class="t" style="left:1565px;top:89.00px;font-size:13px;line-height:13px;color:#BBBBBB;font-family:'Liberation Sans', sans-serif;">Transformer.java</div><svg style="left:1670px;top:91px;" width="9" height="9" viewBox="0 0 9 9"><path d="M0.5 0.5L8.5 8.5M8.5 0.5L0.5 8.5" stroke="#6E6E6E" stroke-width="1.2"/></svg><svg style="left:1694px;top:88px;overflow:visible;" width="16" height="14" viewBox="0 0 16 14"><circle cx="7.0" cy="7.0" r="7.0" fill="#408FAB"/><path d="M8.96 5.32A2.38 2.38 0 1 0 8.96 8.68" fill="none" stroke="#231F20" stroke-width="1.3"/></svg><div class="t" style="left:1713px;top:89.00px;font-size:13px;line-height:13px;color:#BBBBBB;font-family:'Liberation Sans', sans-serif;">InvokerTransformer.java</div><svg style="left:1862px;top:91px;" width="9" height="9" viewBox="0 0 9 9"><path d="M0.5 0.5L8.5 8.5M8.5 0.5L0.5 8.5" stroke="#6E6E6E" stroke-width="1.2"/></svg><svg style="left:1886px;top:88px;overflow:visible;" width="16" height="14" viewBox="0 0 16 14"><circle cx="7.0" cy="7.0" r="7.0" fill="#408FAB"/><path d="M8.96 5.32A2.38 2.38 0 1 0 8.96 8.68" fill="none" stroke="#231F20" stroke-width="1.3"/></svg><div class="t" style="left:1905px;top:89.00px;font-size:13px;line-height:13px;color:#BBBBBB;font-family:'Liberation Sans', sans-serif;">AppletClassLoader.java</div><svg style="left:2047px;top:91px;" width="9" height="9" viewBox="0 0 9 9"><path d="M0.5 0.5L8.5 8.5M8.5 0.5L0.5 8.5" stroke="#6E6E6E" stroke-width="1.2"/></svg><svg style="left:2071px;top:88px;overflow:visible;" width="16" height="14" viewBox="0 0 16 14"><circle cx="7.0" cy="7.0" r="7.0" fill="#408FAB"/><path d="M8.96 5.32A2.38 2.38 0 1 0 8.96 8.68" fill="none" stroke="#231F20" stroke-width="1.3"/><path d="M8.68 -0.70L14.70 3.50L8.68 7.70Z" fill="#62B543"/></svg><div class="t" style="left:2090px;top:89.84px;font-size:12px;line-height:12px;color:#BBBBBB;font-family:'Liberation Sans', sans-serif;">CC1.java</div><svg style="left:2146px;top:91px;" width="9" height="9" viewBox="0 0 9 9"><path d="M0.5 0.5L8.5 8.5M8.5 0.5L0.5 8.5" stroke="#6E6E6E" stroke-width="1.2"/></svg><svg style="left:2170px;top:88px;overflow:visible;" width="16" height="14" viewBox="0 0 16 14"><circle cx="7.0" cy="7.0" r="7.0" fill="#408FAB"/><path d="M8.96 5.32A2.38 2.38 0 1 0 8.96 8.68" fill="none" stroke="#231F20" stroke-width="1.3"/><path d="M8.68 -0.70L14.70 3.50L8.68 7.70Z" fill="#62B543"/></svg><div class="t" style="left:2189px;top:89.84px;font-size:12px;line-height:12px;color:#BBBBBB;font-family:'Liberation Sans', sans-serif;">CC1_test.java</div><svg style="left:2271px;top:91px;" width="9" height="9" viewBox="0 0 9 9"><path d="M0.5 0.5L8.5 8.5M8.5 0.5L0.5 8.5" stroke="#6E6E6E" stroke-width="1.2"/></svg><svg style="left:2523px;top:89px;" width="4" height="13" viewBox="0 0 4 13"><circle cx="2" cy="2" r="1.6" fill="#AFB1B3"/><circle cx="2" cy="6.5" r="1.6" fill="#AFB1B3"/><circle cx="2" cy="11" r="1.6" fill="#AFB1B3"/></svg><div style="left:570px;top:108px;width:1967px;height:815px;background:#2B2B2B;"></div><div style="left:570px;top:108px;width:89px;height:815px;background:#313335;"></div><div style="left:659px;top:108px;width:1px;height:815px;background:#555555;"></div><div style="left:660px;top:553px;width:1877px;height:33px;background:#3A2323;"></div><div style="left:660px;top:586px;width:1877px;height:33px;background:#2D6099;"></div><div style="left:2108px;top:108px;width:1px;height:814px;background:#4B4B4B;"></div><div style="left:647px;top:454px;width:1px;height:165px;background:#3D6A6A;"></div><div style="left:570px;top:108px;width:1967px;height:806px;overflow:hidden;"><div class="t" style="position:absolute;left:15.3px;top:-7.33px;font-family:'Liberation Mono',monospace;font-size:20px;line-height:20px;letter-spacing:-1.4px;color:#606366;">96</div><div class="t" style="position:absolute;left:15.3px;top:25.67px;font-family:'Liberation Mono',monospace;font-size:20px;line-height:20px;letter-spacing:-1.4px;color:#606366;">97</div><div class="t" style="position:absolute;left:15.3px;top:58.67px;font-family:'Liberation Mono',monospace;font-size:20px;line-height:20px;letter-spacing:-1.4px;color:#606366;">98</div><div class="t" style="position:absolute;left:15.3px;top:91.67px;font-family:'Liberation Mono',monospace;font-size:20px;line-height:20px;letter-spacing:-1.4px;color:#606366;">99</div><div class="t" style="position:absolute;left:4.7px;top:124.67px;font-family:'Liberation Mono',monospace;font-size:20px;line-height:20px;letter-spacing:-1.4px;color:#606366;">100</div><div class="t" style="position:absolute;left:4.7px;top:157.67px;font-family:'Liberation Mono',monospace;font-size:20px;line-height:20px;letter-spacing:-1.4px;color:#606366;">101</div><div class="t" style="position:absolute;left:4.7px;top:354.67px;font-family:'Liberation Mono',monospace;font-size:20px;line-height:20px;letter-spacing:-1.4px;color:#606366;">113</div><div class="t" style="position:absolute;left:4.7px;top:387.67px;font-family:'Liberation Mono',monospace;font-size:20px;line-height:20px;letter-spacing:-1.4px;color:#606366;">114</div><div class="t" style="position:absolute;left:4.7px;top:420.67px;font-family:'Liberation Mono',monospace;font-size:20px;line-height:20px;letter-spacing:-1.4px;color:#606366;">115</div><div class="t" style="position:absolute;left:4.7px;top:453.67px;font-family:'Liberation Mono',monospace;font-size:20px;line-height:20px;letter-spacing:-1.4px;color:#606366;">116</div><div class="t" style="position:absolute;left:4.7px;top:486.67px;font-family:'Liberation Mono',monospace;font-size:20px;line-height:20px;letter-spacing:-1.4px;color:#A4A3A3;">117</div><div class="t" style="position:absolute;left:4.7px;top:519.67px;font-family:'Liberation Mono',monospace;font-size:20px;line-height:20px;letter-spacing:-1.4px;color:#606366;">118</div><div class="t" style="position:absolute;left:4.7px;top:552.67px;font-family:'Liberation Mono',monospace;font-size:20px;line-height:20px;letter-spacing:-1.4px;color:#606366;">119</div><div class="t" style="position:absolute;left:4.7px;top:688.67px;font-family:'Liberation Mono',monospace;font-size:20px;line-height:20px;letter-spacing:-1.4px;color:#606366;">127</div><div class="t" style="position:absolute;left:4.7px;top:721.67px;font-family:'Liberation Mono',monospace;font-size:20px;line-height:20px;letter-spacing:-1.4px;color:#606366;">128</div><div class="t" style="position:absolute;left:4.7px;top:754.67px;font-family:'Liberation Mono',monospace;font-size:20px;line-height:20px;letter-spacing:-1.4px;color:#606366;">129</div><div class="t" style="position:absolute;left:4.7px;top:787.67px;font-family:'Liberation Mono',monospace;font-size:20px;line-height:20px;letter-spacing:-1.4px;color:#606366;">130</div><div class="t" style="position:absolute;left:98px;top:-7.86px;font-family:'Liberation Mono',monospace;font-size:22px;line-height:22px;letter-spacing:-1.2px;"><span style="color:#A9B7C6;">            decorated.getMap().putAll(transformed)</span><span style="color:#CC7832;">;</span><span style="color:#808080;">  // avoids double transformation</span></div><div class="t" style="position:absolute;left:98px;top:25.14px;font-family:'Liberation Mono',monospace;font-size:22px;line-height:22px;letter-spacing:-1.2px;"><span style="color:#A9B7C6;">        }</span></div><div class="t" style="position:absolute;left:98px;top:58.14px;font-family:'Liberation Mono',monospace;font-size:22px;line-height:22px;letter-spacing:-1.2px;"><span style="color:#CC7832;">        return </span><span style="color:#A9B7C6;">decorated</span><span style="color:#CC7832;">;</span></div><div class="t" style="position:absolute;left:98px;top:91.14px;font-family:'Liberation Mono',monospace;font-size:22px;line-height:22px;letter-spacing:-1.2px;"><span style="color:#A9B7C6;">    }</span></div><div class="t" style="position:absolute;left:98px;top:157.14px;font-family:'Liberation Mono',monospace;font-size:22px;line-height:22px;letter-spacing:-1.2px;"><span style="color:#808080;">    //-----------------------------------------------------------------------</span></div><div class="t" style="position:absolute;left:98px;top:354.14px;font-family:'Liberation Mono',monospace;font-size:22px;line-height:22px;letter-spacing:-1.2px;"><span style="color:#CC7832;">    protected </span><span style="color:#FFC66D;">TransformedMap</span><span style="color:#A9B7C6;">(Map map</span><span style="color:#CC7832;">, </span><span style="color:#A9B7C6;">Transformer keyTransformer</span><span style="color:#CC7832;">, </span><span style="color:#A9B7C6;">Transformer valueTransformer) </span><span style="color:#A9B7C6;">{</span></div><div class="t" style="position:absolute;left:98px;top:387.14px;font-family:'Liberation Mono',monospace;font-size:22px;line-height:22px;letter-spacing:-1.2px;"><span style="color:#CC7832;">        super</span><span style="color:#A9B7C6;">(map)</span><span style="color:#CC7832;">;</span></div><div class="t" style="position:absolute;left:98px;top:420.14px;font-family:'Liberation Mono',monospace;font-size:22px;line-height:22px;letter-spacing:-1.2px;"><span style="color:#CC7832;">        this</span><span style="color:#A9B7C6;">.</span><span style="color:#9876AA;">keyTransformer</span><span style="color:#A9B7C6;"> = keyTransformer</span><span style="color:#CC7832;">;</span></div><div class="t" style="position:absolute;left:98px;top:453.14px;font-family:'Liberation Mono',monospace;font-size:22px;line-height:22px;letter-spacing:-1.2px;"><span style="color:#CC7832;">        this</span><span style="color:#A9B7C6;">.</span><span style="color:#9876AA;">valueTransformer</span><span style="color:#A9B7C6;"> = valueTransformer</span><span style="color:#CC7832;">;</span></div><div class="t" style="position:absolute;left:98px;top:552.14px;font-family:'Liberation Mono',monospace;font-size:22px;line-height:22px;letter-spacing:-1.2px;"><span style="color:#808080;">    //-----------------------------------------------------------------------</span></div><div class="t" style="position:absolute;left:98px;top:688.14px;font-family:'Liberation Mono',monospace;font-size:22px;line-height:22px;letter-spacing:-1.2px;"><span style="color:#CC7832;">    private void </span><span style="color:#FFC66D;">writeObject</span><span style="color:#A9B7C6;">(ObjectOutputStream out) </span><span style="color:#CC7832;">throws </span><span style="color:#A9B7C6;">IOException {</span></div><div class="t" style="position:absolute;left:98px;top:721.14px;font-family:'Liberation Mono',monospace;font-size:22px;line-height:22px;letter-spacing:-1.2px;"><span style="color:#A9B7C6;">        out.defaultWriteObject()</span><span style="color:#CC7832;">;</span></div><div class="t" style="position:absolute;left:98px;top:754.14px;font-family:'Liberation Mono',monospace;font-size:22px;line-height:22px;letter-spacing:-1.2px;"><span style="color:#A9B7C6;">        out.writeObject(</span><span style="color:#9876AA;">map</span><span style="color:#A9B7C6;">)</span><span style="color:#CC7832;">;</span></div><div class="t" style="position:absolute;left:98px;top:787.14px;font-family:'Liberation Mono',monospace;font-size:22px;line-height:22px;letter-spacing:-1.2px;"><span style="color:#A9B7C6;">    }</span></div><div class="t" style="position:absolute;left:1292px;top:354.14px;font-family:'Liberation Mono',monospace;font-size:22px;line-height:22px;letter-spacing:-1.2px;color:#7F8084;font-style:italic;">keyTransformer: null</div><div class="t" style="position:absolute;left:1571px;top:354.14px;font-family:'Liberation Mono',monospace;font-size:22px;line-height:22px;letter-spacing:-1.2px;color:#7F8084;font-style:italic;">valueTransformer: InvokerTransformer@511</div><div class="t" style="position:absolute;left:356px;top:387.14px;font-family:'Liberation Mono',monospace;font-size:22px;line-height:22px;letter-spacing:-1.2px;color:#7F8084;font-style:italic;">map:  size = 0</div><div class="t" style="position:absolute;left:668px;top:420.14px;font-family:'Liberation Mono',monospace;font-size:22px;line-height:22px;letter-spacing:-1.2px;color:#7F8084;font-style:italic;">keyTransformer: null</div><div class="t" style="position:absolute;left:717px;top:453.14px;font-family:'Liberation Mono',monospace;font-size:22px;line-height:22px;letter-spacing:-1.2px;color:#7F8084;font-style:italic;">valueTransformer: InvokerTransformer@511</div></div><div style="left:1820px;top:458px;width:13px;height:26px;background:#3B514D;"></div><div style="left:716px;top:590px;width:13px;height:26px;background:#3B514D;"></div><div class="t" style="left:1820px;top:462.14px;font-family:'Liberation Mono',monospace;font-size:22px;line-height:22px;color:#FFEF28;">{</div><div class="t" style="left:716px;top:594.14px;font-family:'Liberation Mono',monospace;font-size:22px;line-height:22px;color:#FFEF28;">}</div><div style="left:712px;top:108px;width:1px;height:83px;background:#3B3B3B;"></div><div style="left:760px;top:108px;width:1px;height:17px;background:#3B3B3B;"></div><div style="left:712px;top:487px;width:1px;height:99px;background:#3B3B3B;"></div><div style="left:712px;top:821px;width:1px;height:66px;background:#3B3B3B;"></div><svg style="left:653px;top:133px;" width="13" height="17" viewBox="0 0 13 17"><path d="M0.5 16.5V6.5L6.5 0.5L12.5 6.5V16.5Z" fill="#2B2B2B" stroke="#6B6B6B"/><path d="M3.5 9.5H9.5" stroke="#6B6B6B"/></svg><svg style="left:653px;top:199px;" width="13" height="17" viewBox="0 0 13 17"><path d="M0.5 16.5V6.5L6.5 0.5L12.5 6.5V16.5Z" fill="#2B2B2B" stroke="#6B6B6B"/><path d="M3.5 9.5H9.5" stroke="#6B6B6B"/></svg><svg style="left:652px;top:463.5px;" width="15" height="19" viewBox="0 0 15 19"><path d="M0.5 0.5V10.5L7.5 17.5L14.5 10.5V0.5Z" fill="#2B2B2B" stroke="#6B6B6B"/><path d="M4.5 6.5H10.5" stroke="#6B6B6B"/></svg><svg style="left:653px;top:594px;" width="13" height="17" viewBox="0 0 13 17"><path d="M0.5 16.5V6.5L6.5 0.5L12.5 6.5V16.5Z" fill="#2B2B2B" stroke="#6B6B6B"/><path d="M3.5 9.5H9.5" stroke="#6B6B6B"/></svg><svg style="left:652px;top:798.5px;" width="15" height="19" viewBox="0 0 15 19"><path d="M0.5 0.5V10.5L7.5 17.5L14.5 10.5V0.5Z" fill="#2B2B2B" stroke="#6B6B6B"/><path d="M4.5 6.5H10.5" stroke="#6B6B6B"/></svg><svg style="left:653px;top:895px;" width="13" height="17" viewBox="0 0 13 17"><path d="M0.5 16.5V6.5L6.5 0.5L12.5 6.5V16.5Z" fill="#2B2B2B" stroke="#6B6B6B"/><path d="M3.5 9.5H9.5" stroke="#6B6B6B"/></svg><svg style="left:622px;top:461px;" width="19" height="19" viewBox="0 0 19 19"><path d="M13.3 16.3A7.6 7.6 0 1 1 17.1 9.5V10.2A2.3 2.3 0 0 1 12.5 10.2V5" fill="none" stroke="#C4C4C4" stroke-width="1.9"/><circle cx="9" cy="9" r="3.4" fill="none" stroke="#C4C4C4" stroke-width="1.9"/></svg><svg style="left:622px;top:796px;" width="19" height="19" viewBox="0 0 19 19"><path d="M13.3 16.3A7.6 7.6 0 1 1 17.1 9.5V10.2A2.3 2.3 0 0 1 12.5 10.2V5" fill="none" stroke="#C4C4C4" stroke-width="1.9"/><circle cx="9" cy="9" r="3.4" fill="none" stroke="#C4C4C4" stroke-width="1.9"/></svg><svg style="left:621px;top:558px;" width="22" height="22" viewBox="0 0 22 22"><circle cx="10" cy="12" r="9" fill="#C75450"/><path d="M9 6.5L12 9.5L18.5 2" fill="none" stroke="#2B2B2B" stroke-width="3.2"/><path d="M9 6.5L12 9.5L18.5 2" fill="none" stroke="#D8D8D8" stroke-width="1.8"/></svg><div style="left:716px;top:295px;width:2px;height:152px;background:#4B5A44;"></div><div style="left:716px;top:690px;width:2px;height:95px;background:#4B5A44;"></div><div class="t" style="left:730px;top:301.15px;font-size:14px;line-height:14px;color:#629755;font-family:'Liberation Sans', sans-serif;">Constructor that wraps (not copies).</div><div class="t" style="left:730px;top:326.15px;font-size:14px;line-height:14px;color:#629755;font-family:'Liberation Sans', sans-serif;">If there are any elements already in the collection being decorated, they are NOT transformed.</div><div class="t" style="left:731px;top:353.00px;font-size:13px;line-height:13px;color:#629755;font-family:'Liberation Sans', sans-serif;"><span style="font-size:0.923em">形参</span>:</div><div class="t" style="left:766px;top:353.88px;font-family:'Liberation Mono',monospace;font-size:13.2px;line-height:13.2px;letter-spacing:0px;color:#629755;">map</div><div class="t" style="left:793px;top:352.15px;font-size:14px;line-height:14px;color:#629755;font-family:'Liberation Sans', sans-serif;">– the map to decorate, must not be null</div><div class="t" style="left:766px;top:371.88px;font-family:'Liberation Mono',monospace;font-size:13.2px;line-height:13.2px;letter-spacing:0px;color:#629755;">keyTransformer</div><div class="t" style="left:881px;top:370.15px;font-size:14px;line-height:14px;color:#629755;font-family:'Liberation Sans', sans-serif;">– the transformer to use for key conversion, null means no conversion</div><div class="t" style="left:766px;top:389.88px;font-family:'Liberation Mono',monospace;font-size:13.2px;line-height:13.2px;letter-spacing:0px;color:#629755;">valueTransformer</div><div class="t" style="left:897px;top:388.15px;font-size:14px;line-height:14px;color:#629755;font-family:'Liberation Sans', sans-serif;">– the transformer to use for value conversion, null means no</div><div class="t" style="left:766px;top:406.15px;font-size:14px;line-height:14px;color:#629755;font-family:'Liberation Sans', sans-serif;">conversion</div><div class="t" style="left:731px;top:429.00px;font-size:13px;line-height:13px;color:#629755;font-family:'Liberation Sans', sans-serif;"><span style="font-size:0.923em">抛出</span>:</div><div class="t" style="left:766px;top:429.88px;font-family:'Liberation Mono',monospace;font-size:13.2px;line-height:13.2px;letter-spacing:-0.95px;color:#5C8FD6;">IllegalArgumentException</div><div class="t" style="left:937px;top:428.15px;font-size:14px;line-height:14px;color:#629755;font-family:'Liberation Sans', sans-serif;">– if map is null</div><div class="t" style="left:730px;top:695.15px;font-size:14px;line-height:14px;color:#629755;font-family:'Liberation Sans', sans-serif;">Write the map out using a custom routine.</div><div class="t" style="left:731px;top:720.00px;font-size:13px;line-height:13px;color:#629755;font-family:'Liberation Sans', sans-serif;"><span style="font-size:0.923em">形参</span>:</div><div class="t" style="left:766px;top:720.88px;font-family:'Liberation Mono',monospace;font-size:13.2px;line-height:13.2px;letter-spacing:0px;color:#629755;">out</div><div class="t" style="left:794px;top:719.15px;font-size:14px;line-height:14px;color:#629755;font-family:'Liberation Sans', sans-serif;">– the output stream</div><div class="t" style="left:731px;top:742.00px;font-size:13px;line-height:13px;color:#629755;font-family:'Liberation Sans', sans-serif;"><span style="font-size:0.923em">抛出</span>:</div><div class="t" style="left:766px;top:742.88px;font-family:'Liberation Mono',monospace;font-size:13.2px;line-height:13.2px;letter-spacing:-0.95px;color:#5C8FD6;">IOException</div><div class="t" style="left:847px;top:741.15px;font-size:14px;line-height:14px;color:#629755;font-family:'Liberation Sans', sans-serif;">–</div><div class="t" style="left:731px;top:764.00px;font-size:13px;line-height:13px;color:#629755;font-family:'Liberation Sans', sans-serif;"><span style="font-size:0.923em">自</span>:</div><div class="t" style="left:766px;top:763.15px;font-size:14px;line-height:14px;color:#629755;font-family:'Liberation Sans', sans-serif;">Commons Collections 3.1</div><div class="t" style="left:2435px;top:116.00px;font-size:13px;line-height:13px;color:#BBBBBB;font-family:'Liberation Sans', sans-serif;"><span style="font-size:0.923em">阅读器模式</span></div><div style="left:2510px;top:113px;width:1px;height:18px;background:#4A4A4A;"></div><svg style="left:2518px;top:116px;" width="13" height="11" viewBox="0 0 13 11"><path d="M1 5L5 9L12 1" fill="none" stroke="#499C54" stroke-width="1.6"/></svg><div style="left:2528px;top:390px;width:8px;height:126px;background:#4A4A4A;"></div><div style="left:2523px;top:458px;width:14px;height:1px;background:#B0744A;"></div><div style="left:669px;top:914px;width:1548px;height:8px;background:#4D4D4D;"></div><div style="left:22px;top:922px;width:2515px;height:2px;background:#2B2B2B;"></div><div style="left:22px;top:924px;width:2515px;height:26px;background:#3D4756;"></div><div style="left:22px;top:950px;width:2515px;height:1px;background:#2F3030;"></div><div class="t" style="left:28px;top:931.00px;font-size:13px;line-height:13px;color:#BBBBBB;font-family:'Liberation Sans', sans-serif;"><span style="font-size:0.923em">调试</span>:</div><svg style="left:74px;top:929px;" width="17" height="15" viewBox="0 0 17 15"><rect x="3.5" y="0.5" width="12" height="9" fill="none" stroke="#8A9499"/><rect x="0.5" y="3.5" width="12" height="9" fill="#3D4756" stroke="#8A9499"/><rect x="2" y="5" width="9" height="6" fill="#3D8AB0"/><circle cx="13.5" cy="12.5" r="2" fill="#28D228"/></svg><div class="t" style="left:94px;top:931.00px;font-size:13px;line-height:13px;color:#BBBBBB;font-family:'Liberation Sans', sans-serif;">Main</div><svg style="left:130px;top:932px;" width="9" height="9" viewBox="0 0 9 9"><path d="M0.5 0.5L8.5 8.5M8.5 0.5L0.5 8.5" stroke="#6E7B88" stroke-width="1.1"/></svg><div style="left:62px;top:948px;width:87px;height:3px;background:#4A88C7;border-radius:1.5px;"></div><svg style="left:2491px;top:930px;" width="13" height="13" viewBox="0 0 13 13"><path d="M8.10 10.76 L8.05 12.81 L4.95 12.81 L4.90 10.76 L3.61 10.02 L1.80 10.99 L0.26 8.32 L2.01 7.24 L2.01 5.76 L0.26 4.68 L1.80 2.01 L3.61 2.98 L4.90 2.24 L4.95 0.19 L8.05 0.19 L8.10 2.24 L9.39 2.98 L11.20 2.01 L12.74 4.68 L10.99 5.76 L10.99 7.24 L12.74 8.32 L11.20 10.99 L9.39 10.02Z" fill="#AFB1B3"/><circle cx="6.5" cy="6.5" r="4.03" fill="#AFB1B3"/><circle cx="6.5" cy="6.5" r="2.60" fill="#3D4756"/></svg><div style="left:2518px;top:937px;width:12px;height:2px;background:#AFB1B3;"></div><div style="left:22px;top:951px;width:29px;height:406px;background:#3C3F41;"></div><div style="left:50px;top:951px;width:1px;height:406px;background:#323232;"></div><svg style="left:29px;top:957px;" width="16" height="16" viewBox="0 0 16 16"><path d="M11 4.5A5.5 5.5 0 1 0 8 14" fill="none" stroke="#499C54" stroke-width="2"/><path d="M9 1L14 4L9 7Z" fill="#499C54"/><rect x="9" y="9" width="5" height="5" fill="#AFB1B3"/></svg><svg style="left:29px;top:984px;" width="15" height="15" viewBox="0 0 15 15"><path d="M2 13L8 7" stroke="#AFB1B3" stroke-width="3"/><path d="M7 6A3.5 3.5 0 1 1 10 9L8 7Z" fill="#AFB1B3"/><circle cx="10.5" cy="4.5" r="1.6" fill="#3C3F41"/></svg><div style="left:26px;top:1007px;width:20px;height:1px;background:#4E5254;"></div><div style="left:26px;top:1092px;width:20px;height:1px;background:#4E5254;"></div><div style="left:26px;top:1151px;width:20px;height:1px;background:#4E5254;"></div><div style="left:26px;top:1184px;width:20px;height:1px;background:#4E5254;"></div><div style="left:26px;top:1217px;width:20px;height:1px;background:#4E5254;"></div><svg style="left:30px;top:1016px;" width="13" height="13" viewBox="0 0 13 13"><rect x="0" y="0" width="3" height="13" fill="#499C54"/><path d="M4.5 0L13 6.5L4.5 13Z" fill="#499C54"/></svg><svg style="left:31px;top:1043px;" width="10" height="13" viewBox="0 0 10 13"><rect x="0" y="0" width="3" height="13" fill="#5E6060"/><rect x="6" y="0" width="3" height="13" fill="#5E6060"/></svg><div style="left:31px;top:1071px;width:11px;height:11px;background:#C75450;"></div><svg style="left:29px;top:1101px;" width="15" height="14" viewBox="0 0 15 14"><circle cx="10" cy="5" r="4" fill="#C75450"/><circle cx="6" cy="9" r="5" fill="#C75450" stroke="#3C3F41" stroke-width="1"/></svg><svg style="left:29px;top:1128px;" width="15" height="14" viewBox="0 0 15 14"><circle cx="7.5" cy="7" r="5.5" fill="#C75450"/><path d="M1 13L14 1" stroke="#3C3F41" stroke-width="3"/><path d="M1 13L14 1" stroke="#AFB1B3" stroke-width="1.3"/></svg><svg style="left:29px;top:1161px;" width="15" height="13" viewBox="0 0 15 13"><path d="M0 3H4L5.5 1H9.5L11 3H15V13H0Z" fill="#AFB1B3"/><circle cx="7.5" cy="7.5" r="2.8" fill="#3C3F41"/><circle cx="7.5" cy="7.5" r="1.5" fill="#AFB1B3"/></svg><svg style="left:29px;top:1194px;" width="13" height="13" viewBox="0 0 13 13"><path d="M8.10 10.76 L8.05 12.81 L4.95 12.81 L4.90 10.76 L3.61 10.02 L1.80 10.99 L0.26 8.32 L2.01 7.24 L2.01 5.76 L0.26 4.68 L1.80 2.01 L3.61 2.98 L4.90 2.24 L4.95 0.19 L8.05 0.19 L8.10 2.24 L9.39 2.98 L11.20 2.01 L12.74 4.68 L10.99 5.76 L10.99 7.24 L12.74 8.32 L11.20 10.99 L9.39 10.02Z" fill="#AFB1B3"/><circle cx="6.5" cy="6.5" r="4.03" fill="#AFB1B3"/><circle cx="6.5" cy="6.5" r="2.60" fill="#3C3F41"/></svg><svg style="left:39px;top:1205px;" width="6" height="4" viewBox="0 0 6 4"><path d="M0 0H6L3 3.5Z" fill="#AFB1B3"/></svg><svg style="left:29px;top:1226px;" width="15" height="16" viewBox="0 0 15 16"><path d="M8 1L14 7L11 8L8 11L7 8Z" fill="#AFB1B3"/><path d="M1 15L8 8" stroke="#AFB1B3" stroke-width="1.5"/></svg><div style="left:51px;top:951px;width:2486px;height:28px;background:#3C3F41;"></div><div style="left:51px;top:979px;width:2486px;height:1px;background:#323232;"></div><div class="t" style="left:64px;top:959.00px;font-size:13px;line-height:13px;color:#BBBBBB;font-family:'Liberation Sans', sans-serif;">Debugger</div><div style="left:51px;top:978px;width:78px;height:2px;background:#4A88C7;"></div><div class="t" style="left:140px;top:959.00px;font-size:13px;line-height:13px;color:#BBBBBB;font-family:'Liberation Sans', sans-serif;"><span style="font-size:0.923em">控制台</span></div><svg style="left:193px;top:959px;" width="13" height="12" viewBox="0 0 13 12"><rect x="0" y="0.5" width="12" height="2" fill="#AFB1B3"/><rect x="0" y="5" width="12" height="2.2" fill="#3592C4"/><rect x="0" y="9.5" width="12" height="2" fill="#AFB1B3"/></svg><div style="left:215px;top:955px;width:1px;height:20px;background:#515151;"></div><svg style="left:225px;top:958px;" width="14" height="14" viewBox="0 0 14 14"><path d="M1 7L5.5 2.5L9.5 6.5" fill="none" stroke="#3592C4" stroke-width="1.8"/><path d="M12.5 4V9H7.5Z" fill="#3592C4"/><rect x="1" y="11.5" width="12" height="2" fill="#AFB1B3"/></svg><svg style="left:252px;top:957px;" width="13" height="15" viewBox="0 0 13 15"><path d="M6.5 0V7" stroke="#3592C4" stroke-width="1.8"/><path d="M2 5.5H11L6.5 10Z" fill="#3592C4"/><rect x="0.5" y="12.5" width="12" height="2" fill="#AFB1B3"/></svg><svg style="left:278px;top:957px;" width="13" height="15" viewBox="0 0 13 15"><path d="M6.5 4V11" stroke="#3592C4" stroke-width="1.8"/><path d="M2 5.5H11L6.5 1Z" fill="#3592C4"/><rect x="0.5" y="12.5" width="12" height="2" fill="#AFB1B3"/></svg><svg style="left:303px;top:958px;" width="15" height="15" viewBox="0 0 15 15"><path d="M1 1L6 6" stroke="#3592C4" stroke-width="1.8"/><path d="M8 2.5V8H2.5Z" fill="#3592C4"/><path d="M9.5 5H13M11.2 5V13M9.5 13H13" fill="none" stroke="#D0D0D0" stroke-width="0.9"/></svg><div style="left:326px;top:955px;width:1px;height:20px;background:#515151;"></div><svg style="left:337px;top:959px;" width="12" height="12" viewBox="0 0 12 12"><rect x="0" y="0" width="12" height="12" fill="#AFB1B3"/><rect x="2" y="2" width="8" height="2" fill="#3C3F41"/><rect x="2" y="5.5" width="2" height="2" fill="#3C3F41"/><rect x="5" y="5.5" width="2" height="2" fill="#3C3F41"/><rect x="8" y="5.5" width="2" height="2" fill="#3C3F41"/><rect x="2" y="8.5" width="2" height="2" fill="#3C3F41"/><rect x="5" y="8.5" width="2" height="2" fill="#3C3F41"/><rect x="8" y="8.5" width="2" height="2" fill="#3C3F41"/></svg><svg style="left:363px;top:959px;" width="13" height="12" viewBox="0 0 13 12"><path d="M0 1H4M0 6H4M0 10.5H4M7 1H12M7 6H12M7 10.5H12M3 11L8 1" fill="none" stroke="#5E6060" stroke-width="1.6"/></svg><div style="left:51px;top:980px;width:697px;height:377px;background:#3C3F41;"></div><div style="left:748px;top:980px;width:1px;height:377px;background:#323232;"></div><svg style="left:61px;top:987px;" width="15" height="13" viewBox="0 0 15 13"><path d="M1 7L5.5 11.5L14 1.5" fill="none" stroke="#D9692F" stroke-width="2.2"/></svg><div class="t" style="left:79px;top:987.00px;font-size:13px;line-height:13px;color:#BBBBBB;font-family:'Liberation Sans', sans-serif;">&quot;main&quot;@1 <span style="font-size:0.923em">在组</span>“main”: <span style="font-size:0.923em">正在运行</span></div><svg style="left:701px;top:987px;" width="13" height="13" viewBox="0 0 13 13"><path d="M0 0H13L8 6V13L5 11V6Z" fill="#AFB1B3"/></svg><svg style="left:729px;top:991px;" width="9" height="5" viewBox="0 0 9 5"><path d="M0 0H9L4.5 5Z" fill="#AFB1B3"/></svg><div style="left:51px;top:1009px;width:697px;height:21px;background:#0D293E;"></div><svg style="left:60px;top:1012px;" width="14" height="13" viewBox="0 0 14 13"><path d="M3 6H9A4 4 0 0 1 9 13H6" fill="none" stroke="#BBBBBB" stroke-width="1.2"/><path d="M5 2L1.5 6L5 10" fill="none" stroke="#BBBBBB" stroke-width="1.2"/></svg><div class="t" style="left:77px;top:1013.00px;font-size:13px;line-height:13px;font-family:'Liberation Sans',sans-serif;color:#BBBBBB;">&lt;init&gt;:117, TransformedMap <i style="color:#BBBBBB">(org.apache.commons.collections.map)</i></div><div style="left:51px;top:1030px;width:697px;height:21px;background:#4D493F;"></div><div class="t" style="left:77px;top:1034.00px;font-size:13px;line-height:13px;font-family:'Liberation Sans',sans-serif;color:#8A8A8A;">decorate:74, TransformedMap <i>(org.apache.commons.collections.map)</i></div><div class="t" style="left:77px;top:1055.00px;font-size:13px;line-height:13px;color:#BBBBBB;font-family:'Liberation Sans', sans-serif;">main:22, Main</div><div class="t" style="left:59px;top:1340.34px;font-size:12px;line-height:12px;color:#808080;font-family:'Liberation Sans', sans-serif;"><span style="font-size:0.923em">使用</span> Ctrl+Alt+<span style="font-size:0.923em">向上箭头</span> <span style="font-size:0.923em">和</span> Ctrl+Alt+<span style="font-size:0.923em">向下箭头</span> <span style="font-size:0.923em">从</span> IDE <span style="font-size:0.923em">中的任意位置切换帧</span></div><svg style="left:732px;top:1342px;" width="9" height="9" viewBox="0 0 9 9"><path d="M0.5 0.5L8.5 8.5M8.5 0.5L0.5 8.5" stroke="#5E6060" stroke-width="1.1"/></svg><div style="left:749px;top:980px;width:1788px;height:377px;background:#3C3F41;"></div><div style="left:749px;top:980px;width:1788px;height:28px;background:#45494A;"></div><div style="left:749px;top:1008px;width:1788px;height:1px;background:#323232;"></div><div class="t" style="left:757px;top:988.04px;font-size:13px;line-height:13px;font-family:'Liberation Mono',monospace;color:#787878;letter-spacing:-0.9px;"><span style="font-family:'Liberation Sans',sans-serif;font-size:12px;letter-spacing:0">计算表达式</span>(Enter)<span style="font-family:'Liberation Sans',sans-serif;font-size:12px;letter-spacing:0">或添加监视</span>(Ctrl+Shift+Enter)</div><svg style="left:2491px;top:988px;" width="11" height="11" viewBox="0 0 11 11"><path d="M5.5 0V11M0 5.5H11" stroke="#5E6060" stroke-width="1.3"/></svg><svg style="left:2518px;top:991px;" width="9" height="5" viewBox="0 0 9 5"><path d="M0 0H9L4.5 5Z" fill="#AFB1B3"/></svg><svg style="left:2517px;top:958px;" width="14" height="14" viewBox="0 0 14 14"><rect x="0" y="0" width="6" height="5" fill="#AFB1B3"/><rect x="7" y="0" width="6" height="5" fill="#AFB1B3"/><rect x="0" y="6" width="13" height="5" fill="#AFB1B3"/><path d="M10 12H13L11.5 14Z" fill="#AFB1B3"/></svg><div style="left:749px;top:1149px;width:1788px;height:20px;background:#4B6EAF;"></div><svg style="left:777px;top:1013px;" width="11" height="11" viewBox="0 0 11 11"><rect x="0" y="0" width="11" height="2.6" fill="#D9A343"/><rect x="0" y="4.2" width="11" height="2.6" fill="#D9A343"/><rect x="0" y="8.4" width="11" height="2.6" fill="#D9A343"/></svg><div class="t" style="left:792px;top:1013.00px;font-size:13px;line-height:13px;font-family:'Liberation Sans',sans-serif;"><span style="color:#E7736C;">this</span><span style="color:#BBBBBB;"> = </span><span style="color:#8A8A8A;">{TransformedMap@509}</span><span style="color:#BBBBBB;">  size = 0</span></div><svg style="left:774px;top:1032px;" width="14" height="14" viewBox="0 0 14 14"><circle cx="7" cy="7" r="7" fill="#D9A343" opacity="0.85"/><path d="M5 12V4.5M5 5A2.4 2.4 0 1 1 5 9" fill="none" stroke="#231F20" stroke-width="1.1"/></svg><div class="t" style="left:792px;top:1033.00px;font-size:13px;line-height:13px;font-family:'Liberation Sans',sans-serif;"><span style="color:#E7736C;">map</span><span style="color:#BBBBBB;"> = </span><span style="color:#8A8A8A;">{HashMap@510}</span><span style="color:#BBBBBB;">  size = 0</span></div><svg style="left:774px;top:1052px;" width="14" height="14" viewBox="0 0 14 14"><circle cx="7" cy="7" r="7" fill="#D9A343" opacity="0.85"/><path d="M5 12V4.5M5 5A2.4 2.4 0 1 1 5 9" fill="none" stroke="#231F20" stroke-width="1.1"/></svg><div class="t" style="left:792px;top:1053.00px;font-size:13px;line-height:13px;font-family:'Liberation Sans',sans-serif;"><span style="color:#E7736C;">keyTransformer</span><span style="color:#BBBBBB;"> = null</span></div><svg style="left:756px;top:1076px;" width="10" height="7" viewBox="0 0 10 7"><path d="M1 1L5 5L9 1" fill="none" stroke="#AFB1B3" stroke-width="1.3"/></svg><svg style="left:774px;top:1072px;" width="14" height="14" viewBox="0 0 14 14"><circle cx="7" cy="7" r="7" fill="#D9A343" opacity="0.85"/><path d="M5 12V4.5M5 5A2.4 2.4 0 1 1 5 9" fill="none" stroke="#231F20" stroke-width="1.1"/></svg><div class="t" style="left:792px;top:1073.00px;font-size:13px;line-height:13px;font-family:'Liberation Sans',sans-serif;"><span style="color:#E7736C;">valueTransformer</span><span style="color:#BBBBBB;"> = </span><span style="color:#8A8A8A;">{InvokerTransformer@511}</span></div><svg style="left:775px;top:1094px;" width="7" height="10" viewBox="0 0 7 10"><path d="M1 1L5 5L1 9" fill="none" stroke="#AFB1B3" stroke-width="1.3"/></svg><svg style="left:791px;top:1091px;overflow:visible;" width="15" height="15" viewBox="0 0 15 15"><circle cx="7" cy="7.5" r="7" fill="#D9A343" opacity="0.85"/><path d="M8.5 3.5C7 3 6 3.8 6 5V12M4.5 6.5H8.5" fill="none" stroke="#231F20" stroke-width="1.1"/><ellipse cx="2.8" cy="1.8" rx="2.8" ry="1.7" transform="rotate(-35 2.8 1.8)" fill="#A7B0B8"/></svg><div class="t" style="left:810px;top:1093.00px;font-size:13px;line-height:13px;font-family:'Liberation Sans',sans-serif;"><span style="color:#E7736C;">iMethodName</span><span style="color:#BBBBBB;"> = </span><span style="color:#6A8759;">&quot;exec&quot;</span></div><svg style="left:775px;top:1114px;" width="7" height="10" viewBox="0 0 7 10"><path d="M1 1L5 5L1 9" fill="none" stroke="#AFB1B3" stroke-width="1.3"/></svg><svg style="left:791px;top:1111px;overflow:visible;" width="15" height="15" viewBox="0 0 15 15"><circle cx="7" cy="7.5" r="7" fill="#D9A343" opacity="0.85"/><path d="M8.5 3.5C7 3 6 3.8 6 5V12M4.5 6.5H8.5" fill="none" stroke="#231F20" stroke-width="1.1"/><ellipse cx="2.8" cy="1.8" rx="2.8" ry="1.7" transform="rotate(-35 2.8 1.8)" fill="#A7B0B8"/></svg><div class="t" style="left:810px;top:1113.00px;font-size:13px;line-height:13px;font-family:'Liberation Sans',sans-serif;"><span style="color:#E7736C;">iParamTypes</span><span style="color:#BBBBBB;"> = </span><span style="color:#8A8A8A;">{Class[1]@516}</span></div><svg style="left:775px;top:1134px;" width="7" height="10" viewBox="0 0 7 10"><path d="M1 1L5 5L1 9" fill="none" stroke="#AFB1B3" stroke-width="1.3"/></svg><svg style="left:791px;top:1131px;overflow:visible;" width="15" height="15" viewBox="0 0 15 15"><circle cx="7" cy="7.5" r="7" fill="#D9A343" opacity="0.85"/><path d="M8.5 3.5C7 3 6 3.8 6 5V12M4.5 6.5H8.5" fill="none" stroke="#231F20" stroke-width="1.1"/><ellipse cx="2.8" cy="1.8" rx="2.8" ry="1.7" transform="rotate(-35 2.8 1.8)" fill="#A7B0B8"/></svg><div class="t" style="left:810px;top:1133.00px;font-size:13px;line-height:13px;font-family:'Liberation Sans',sans-serif;"><span style="color:#E7736C;">iArgs</span><span style="color:#BBBBBB;"> = </span><span style="color:#8A8A8A;">{Object[1]@517}</span></div><svg style="left:756px;top:1156px;" width="10" height="7" viewBox="0 0 10 7"><path d="M1 1L5 5L9 1" fill="none" stroke="#AFB1B3" stroke-width="1.3"/></svg><svg style="left:774px;top:1155px;" width="18" height="8" viewBox="0 0 18 8"><circle cx="4" cy="4" r="3.2" fill="none" stroke="#C8CCD6" stroke-width="1.4"/><circle cx="13" cy="4" r="3.2" fill="none" stroke="#C8CCD6" stroke-width="1.4"/><path d="M7 4H10" stroke="#C8CCD6" stroke-width="1.4"/></svg><div class="t" style="left:792px;top:1153.00px;font-size:13px;line-height:13px;font-family:'Liberation Sans',sans-serif;"><span style="color:#FFFFFF;">this.valueTransformer = {InvokerTransformer@511}</span></div><svg style="left:774px;top:1176px;" width="10" height="7" viewBox="0 0 10 7"><path d="M1 1L5 5L9 1" fill="none" stroke="#AFB1B3" stroke-width="1.3"/></svg><svg style="left:791px;top:1171px;overflow:visible;" width="15" height="15" viewBox="0 0 15 15"><circle cx="7" cy="7.5" r="7" fill="#D9A343" opacity="0.85"/><path d="M8.5 3.5C7 3 6 3.8 6 5V12M4.5 6.5H8.5" fill="none" stroke="#231F20" stroke-width="1.1"/><ellipse cx="2.8" cy="1.8" rx="2.8" ry="1.7" transform="rotate(-35 2.8 1.8)" fill="#A7B0B8"/></svg><div class="t" style="left:810px;top:1173.00px;font-size:13px;line-height:13px;font-family:'Liberation Sans',sans-serif;"><span style="color:#E7736C;">iMethodName</span><span style="color:#BBBBBB;"> = </span><span style="color:#6A8759;">&quot;exec&quot;</span></div><svg style="left:793px;top:1194px;" width="7" height="10" viewBox="0 0 7 10"><path d="M1 1L5 5L1 9" fill="none" stroke="#AFB1B3" stroke-width="1.3"/></svg><svg style="left:809px;top:1191px;overflow:visible;" width="15" height="15" viewBox="0 0 15 15"><circle cx="7" cy="7.5" r="7" fill="#D9A343" opacity="0.85"/><path d="M8.5 3.5C7 3 6 3.8 6 5V12M4.5 6.5H8.5" fill="none" stroke="#231F20" stroke-width="1.1"/><ellipse cx="2.8" cy="1.8" rx="2.8" ry="1.7" transform="rotate(-35 2.8 1.8)" fill="#A7B0B8"/></svg><div class="t" style="left:828px;top:1193.00px;font-size:13px;line-height:13px;font-family:'Liberation Sans',sans-serif;"><span style="color:#E7736C;">value</span><span style="color:#BBBBBB;"> = </span><span style="color:#8A8A8A;">{char[4]@524}</span><span style="color:#BBBBBB;"> [e, x, e, c]</span></div><svg style="left:809px;top:1211px;overflow:visible;" width="15" height="15" viewBox="0 0 15 15"><circle cx="7" cy="7.5" r="7" fill="#D9A343" opacity="0.85"/><path d="M8.5 3.5C7 3 6 3.8 6 5V12M4.5 6.5H8.5" fill="none" stroke="#231F20" stroke-width="1.1"/></svg><div class="t" style="left:828px;top:1213.00px;font-size:13px;line-height:13px;font-family:'Liberation Sans',sans-serif;"><span style="color:#E7736C;">hash</span><span style="color:#BBBBBB;"> = 0</span></div><svg style="left:774px;top:1236px;" width="10" height="7" viewBox="0 0 10 7"><path d="M1 1L5 5L9 1" fill="none" stroke="#AFB1B3" stroke-width="1.3"/></svg><svg style="left:791px;top:1231px;overflow:visible;" width="15" height="15" viewBox="0 0 15 15"><circle cx="7" cy="7.5" r="7" fill="#D9A343" opacity="0.85"/><path d="M8.5 3.5C7 3 6 3.8 6 5V12M4.5 6.5H8.5" fill="none" stroke="#231F20" stroke-width="1.1"/><ellipse cx="2.8" cy="1.8" rx="2.8" ry="1.7" transform="rotate(-35 2.8 1.8)" fill="#A7B0B8"/></svg><div class="t" style="left:810px;top:1233.00px;font-size:13px;line-height:13px;font-family:'Liberation Sans',sans-serif;"><span style="color:#E7736C;">iParamTypes</span><span style="color:#BBBBBB;"> = </span><span style="color:#8A8A8A;">{Class[1]@516}</span></div><svg style="left:793px;top:1254px;" width="7" height="10" viewBox="0 0 7 10"><path d="M1 1L5 5L1 9" fill="none" stroke="#AFB1B3" stroke-width="1.3"/></svg><svg style="left:812px;top:1253px;" width="11" height="11" viewBox="0 0 11 11"><rect x="0" y="0" width="11" height="2.6" fill="#D9A343"/><rect x="0" y="4.2" width="11" height="2.6" fill="#D9A343"/><rect x="0" y="8.4" width="11" height="2.6" fill="#D9A343"/></svg><div class="t" style="left:828px;top:1253.00px;font-size:13px;line-height:13px;font-family:'Liberation Sans',sans-serif;"><span style="color:#E7736C;">0</span><span style="color:#BBBBBB;"> = </span><span style="color:#8A8A8A;">{Class@337}</span><span style="color:#BBBBBB;"> &quot;class java.lang.String&quot;</span><span style="color:#5C8FD6;"> ... <span style="font-size:12px">导航</span></span></div><svg style="left:774px;top:1276px;" width="10" height="7" viewBox="0 0 10 7"><path d="M1 1L5 5L9 1" fill="none" stroke="#AFB1B3" stroke-width="1.3"/></svg><svg style="left:791px;top:1271px;overflow:visible;" width="15" height="15" viewBox="0 0 15 15"><circle cx="7" cy="7.5" r="7" fill="#D9A343" opacity="0.85"/><path d="M8.5 3.5C7 3 6 3.8 6 5V12M4.5 6.5H8.5" fill="none" stroke="#231F20" stroke-width="1.1"/><ellipse cx="2.8" cy="1.8" rx="2.8" ry="1.7" transform="rotate(-35 2.8 1.8)" fill="#A7B0B8"/></svg><div class="t" style="left:810px;top:1273.00px;font-size:13px;line-height:13px;font-family:'Liberation Sans',sans-serif;"><span style="color:#E7736C;">iArgs</span><span style="color:#BBBBBB;"> = </span><span style="color:#8A8A8A;">{Object[1]@517}</span></div><svg style="left:793px;top:1294px;" width="7" height="10" viewBox="0 0 7 10"><path d="M1 1L5 5L1 9" fill="none" stroke="#AFB1B3" stroke-width="1.3"/></svg><svg style="left:812px;top:1293px;" width="11" height="11" viewBox="0 0 11 11"><rect x="0" y="0" width="11" height="2.6" fill="#D9A343"/><rect x="0" y="4.2" width="11" height="2.6" fill="#D9A343"/><rect x="0" y="8.4" width="11" height="2.6" fill="#D9A343"/></svg><div class="t" style="left:828px;top:1293.00px;font-size:13px;line-height:13px;font-family:'Liberation Sans',sans-serif;"><span style="color:#E7736C;">0</span><span style="color:#BBBBBB;"> = </span><span style="color:#6A8759;">&quot;calc&quot;</span></div><div style="left:741px;top:1147px;width:466px;height:177px;border:2px solid #E8202A;"></div><div class="t" style="left:5px;top:1273px;font-size:12px;line-height:12px;color:#BBBBBB;font-family:'Liberation Sans',sans-serif;transform:rotate(-90deg);transform-origin:0 0;">书签</div><svg style="left:6px;top:1278px;" width="10" height="12" viewBox="0 0 10 12"><path d="M0 0H10V12L5 8L0 12Z" fill="#AFB1B3"/></svg><div style="left:0px;top:1300px;width:22px;height:57px;background:#2D2F30;"></div><div class="t" style="left:5px;top:1331px;font-size:12px;line-height:12px;color:#E0E0E0;font-family:'Liberation Sans',sans-serif;transform:rotate(-90deg);transform-origin:0 0;">结构</div><svg style="left:6px;top:1336px;" width="11" height="10" viewBox="0 0 11 10"><rect x="5" y="0" width="4" height="4" fill="#D0D0D0"/><rect x="0" y="5" width="4" height="4" fill="#D0D0D0"/><rect x="5" y="5" width="4" height="4" fill="#D0D0D0"/></svg><div style="left:0px;top:1357px;width:2560px;height:23px;background:#3C3F41;"></div><div style="left:0px;top:1357px;width:2560px;height:1px;background:#323232;"></div><div style="left:0px;top:1379px;width:2560px;height:1px;background:#4A4D4F;"></div><div style="left:217px;top:1358px;width:57px;height:21px;background:#2D2F30;"></div><svg style="left:34px;top:1362px;" width="9" height="14" viewBox="0 0 9 14"><circle cx="2" cy="2" r="1.8" fill="#AFB1B3"/><circle cx="2" cy="12" r="1.8" fill="#AFB1B3"/><circle cx="7" cy="4" r="1.8" fill="#AFB1B3"/><path d="M2 2V12M7 4C7 8 2 7 2 10" fill="none" stroke="#AFB1B3" stroke-width="1.4"/></svg><div class="t" style="left:49px;top:1363.00px;font-size:13px;line-height:13px;color:#BBBBBB;font-family:'Liberation Sans', sans-serif;"><span style="font-size:0.923em">版本控制</span></div><svg style="left:113px;top:1363px;" width="12" height="12" viewBox="0 0 12 12"><circle cx="5" cy="5" r="3.8" fill="none" stroke="#AFB1B3" stroke-width="1.8"/><path d="M8 8L11.5 11.5" stroke="#AFB1B3" stroke-width="2"/></svg><div class="t" style="left:129px;top:1363.00px;font-size:13px;line-height:13px;color:#BBBBBB;font-family:'Liberation Sans', sans-serif;"><span style="font-size:0.923em">查找</span></div><svg style="left:172px;top:1363px;" width="9" height="11" viewBox="0 0 9 11"><path d="M0 0L9 5.5L0 11Z" fill="#AFB1B3"/></svg><div class="t" style="left:186px;top:1363.00px;font-size:13px;line-height:13px;color:#BBBBBB;font-family:'Liberation Sans', sans-serif;"><span style="font-size:0.923em">运行</span></div><svg style="left:227px;top:1363px;" width="13" height="13" viewBox="0 0 13 13"><ellipse cx="6" cy="7.5" rx="4" ry="4.5" fill="#AFB1B3"/><circle cx="6" cy="3" r="2" fill="#AFB1B3"/><path d="M1 4L3 6M11 4L9 6M0 8H2M10 8H12M1 12L3 10M11 12L9 10" stroke="#AFB1B3" stroke-width="1.2"/><circle cx="10.5" cy="11" r="1.8" fill="#28D228"/></svg><div class="t" style="left:244px;top:1363.00px;font-size:13px;line-height:13px;color:#E8E8E8;font-family:'Liberation Sans', sans-serif;"><span style="font-size:0.923em">调试</span></div><svg style="left:286px;top:1363px;" width="11" height="10" viewBox="0 0 11 10"><rect x="0" y="0" width="2" height="2" fill="#AFB1B3"/><rect x="3.5" y="0" width="7.5" height="2" fill="#AFB1B3"/><rect x="0" y="4" width="2" height="2" fill="#AFB1B3"/><rect x="3.5" y="4" width="7.5" height="2" fill="#AFB1B3"/><rect x="0" y="8" width="2" height="2" fill="#AFB1B3"/><rect x="3.5" y="8" width="7.5" height="2" fill="#AFB1B3"/></svg><div class="t" style="left:301px;top:1363.84px;font-size:12px;line-height:12px;color:#BBBBBB;font-family:'Liberation Sans', sans-serif;">TODO</div><svg style="left:353px;top:1363px;" width="11" height="11" viewBox="0 0 11 11"><circle cx="5.5" cy="5.5" r="5.5" fill="#AFB1B3"/><rect x="4.7" y="2" width="1.6" height="4.5" fill="#3C3F41"/><rect x="4.7" y="7.7" width="1.6" height="1.6" fill="#3C3F41"/></svg><div class="t" style="left:369px;top:1363.00px;font-size:13px;line-height:13px;color:#BBBBBB;font-family:'Liberation Sans', sans-serif;"><span style="font-size:0.923em">问题</span></div><svg style="left:410px;top:1363px;" width="12" height="11" viewBox="0 0 12 11"><rect x="0" y="0" width="12" height="11" fill="#AFB1B3"/><path d="M2.5 2.5L5 5L2.5 7.5M6 8.5H9.5" fill="none" stroke="#3C3F41" stroke-width="1.3"/></svg><div class="t" style="left:426px;top:1363.00px;font-size:13px;line-height:13px;color:#BBBBBB;font-family:'Liberation Sans', sans-serif;"><span style="font-size:0.923em">终端</span></div><svg style="left:466px;top:1362px;" width="13" height="13" viewBox="0 0 13 13"><circle cx="6.5" cy="6.5" r="6" fill="#AFB1B3"/><path d="M5 3.5L9.5 6.5L5 9.5Z" fill="#3C3F41"/></svg><div class="t" style="left:482px;top:1363.00px;font-size:13px;line-height:13px;color:#BBBBBB;font-family:'Liberation Sans', sans-serif;"><span style="font-size:0.923em">服务</span></div><svg style="left:523px;top:1362px;" width="14" height="14" viewBox="0 0 14 14"><circle cx="6" cy="6" r="5" fill="none" stroke="#AFB1B3" stroke-width="1.4"/><path d="M6 3V6.5H4" fill="none" stroke="#AFB1B3" stroke-width="1.2"/><path d="M7 6L14 10L7 14Z" fill="#AFB1B3"/></svg><div class="t" style="left:540px;top:1363.84px;font-size:12px;line-height:12px;color:#BBBBBB;font-family:'Liberation Sans', sans-serif;">Profiler</div><svg style="left:598px;top:1362px;" width="14" height="13" viewBox="0 0 14 13"><path d="M1 4L5 0L8 2L6 4L13 11L11.5 12.5L4.5 5.5L2.5 7Z" fill="#AFB1B3"/></svg><div class="t" style="left:615px;top:1363.00px;font-size:13px;line-height:13px;color:#BBBBBB;font-family:'Liberation Sans', sans-serif;"><span style="font-size:0.923em">构建</span></div><svg style="left:657px;top:1362px;" width="14" height="13" viewBox="0 0 14 13"><path d="M0 13L5 0L8 7L11 1L14 13Z" fill="#7B3FE4"/><path d="M3 13L7 4L10 13Z" fill="#3F6FE4"/></svg><div class="t" style="left:674px;top:1363.84px;font-size:12px;line-height:12px;color:#BBBBBB;font-family:'Liberation Sans', sans-serif;">MurphySec</div><svg style="left:757px;top:1362px;" width="12" height="13" viewBox="0 0 12 13"><path d="M6 0L12 3L6 6L0 3Z" fill="#AFB1B3"/><path d="M0 6L6 9L12 6M0 9L6 12L12 9" fill="none" stroke="#AFB1B3" stroke-width="1.3"/></svg><div class="t" style="left:775px;top:1363.84px;font-size:12px;line-height:12px;color:#BBBBBB;font-family:'Liberation Sans', sans-serif;">Dependencies</div><div style="left:0px;top:1380px;width:2560px;height:20px;background:#3C3F41;"></div><div style="left:0px;top:1400px;width:2560px;height:2px;background:#232425;"></div><svg style="left:11px;top:1383px;" width="14" height="14" viewBox="0 0 14 14"><path d="M3.5 0.5H13.5V10.5H3.5Z" fill="none" stroke="#AFB1B3"/><path d="M1.5 3V12.5H11" fill="none" stroke="#AFB1B3"/></svg><svg style="left:2344px;top:1383px;" width="16" height="14" viewBox="0 0 16 14"><path d="M2 5C2 1 5 0.5 8 2C11 0.5 14 1 14 5V10C14 13 11 14 8 14C5 14 2 13 2 10Z" fill="#D0D0D0"/><ellipse cx="5.5" cy="5" rx="2.3" ry="2.5" fill="#3C3F41"/><ellipse cx="10.5" cy="5" rx="2.3" ry="2.5" fill="#3C3F41"/><path d="M6 10V12M10 10V12" stroke="#3C3F41" stroke-width="1.3"/></svg><div class="t" style="left:2372px;top:1384.00px;font-size:13px;line-height:13px;color:#BBBBBB;font-family:'Liberation Sans', sans-serif;">117:1</div><div class="t" style="left:2416px;top:1384.00px;font-size:13px;line-height:13px;color:#808080;font-family:'Liberation Sans', sans-serif;">CRLF</div><div class="t" style="left:2456px;top:1384.00px;font-size:13px;line-height:13px;color:#BBBBBB;font-family:'Liberation Sans', sans-serif;">UTF-8</div><div class="t" style="left:2501px;top:1384.00px;font-size:13px;line-height:13px;color:#BBBBBB;font-family:'Liberation Sans', sans-serif;">4 <span style="font-size:0.923em">个空格</span></div><div style="left:2537px;top:82px;width:23px;height:1275px;background:#3C3F41;"></div><div style="left:2537px;top:82px;width:1px;height:1275px;background:#323232;"></div><div class="t" style="left:2542px;top:89.15px;font-size:14px;line-height:14px;color:#AFB1B3;font-family:'Liberation Sans', sans-serif;font-weight:bold;font-style:italic;">m</div><div class="t" style="left:2554px;top:110px;font-size:11px;line-height:11px;color:#BBBBBB;font-family:'Liberation Sans',sans-serif;transform:rotate(90deg);transform-origin:0 0;">Maven</div><svg style="left:2542px;top:163px;" width="12" height="14" viewBox="0 0 12 14"><ellipse cx="6" cy="2.5" rx="5.5" ry="2.2" fill="#AFB1B3"/><path d="M0.5 4.3A5.5 2.2 0 0 0 11.5 4.3V7A5.5 2.2 0 0 1 0.5 7Z" fill="#AFB1B3"/><path d="M0.5 8.6A5.5 2.2 0 0 0 11.5 8.6V11.3A5.5 2.2 0 0 1 0.5 11.3Z" fill="#AFB1B3"/></svg><div class="t" style="left:2555px;top:179px;font-size:11px;line-height:11px;color:#BBBBBB;font-family:'Liberation Sans',sans-serif;transform:rotate(90deg);transform-origin:0 0;">数据库</div><svg style="left:2541px;top:237px;" width="15" height="14" viewBox="0 0 15 14"><path d="M2 5C2 1 5 0.5 7.5 2C10 0.5 13 1 13 5V10C13 13 10 14 7.5 14C5 14 2 13 2 10Z" fill="#C8C8C8"/><ellipse cx="5.3" cy="5" rx="2" ry="2.4" fill="#3C3F41"/><ellipse cx="9.7" cy="5" rx="2" ry="2.4" fill="#3C3F41"/><path d="M5.5 10V12M9.5 10V12" stroke="#3C3F41" stroke-width="1.2"/></svg><div class="t" style="left:2554px;top:257px;font-size:11px;line-height:11px;color:#BBBBBB;font-family:'Liberation Sans',sans-serif;transform:rotate(90deg);transform-origin:0 0;">GitHub Copilot</div><svg style="left:2541px;top:356px;" width="14" height="14" viewBox="0 0 14 14"><path d="M1 10C3 8 2 3 6 2.5C10 3 9 8 11 10Z" fill="#AFB1B3"/><rect x="4.5" y="11" width="3" height="2" fill="#AFB1B3"/><circle cx="11" cy="3" r="2.6" fill="#3592C4"/></svg><div class="t" style="left:2555px;top:372px;font-size:11px;line-height:11px;color:#BBBBBB;font-family:'Liberation Sans',sans-serif;transform:rotate(90deg);transform-origin:0 0;">通知</div><div style="left:2335px;top:1055px;width:224px;height:24px;background:#FFFFFF;border:1px solid #D0D8E8;border-radius:2px;"></div><svg style="left:2335px;top:1050px;" width="32" height="32" viewBox="0 0 32 32"><path d="M4 6L24 1L31 22L10 28Z" fill="#F0561D"/><path d="M22 9C20 6 11 7 12 11C13 14 22 13 22 18C22 22 13 22 10 19" fill="none" stroke="#FFFFFF" stroke-width="3.5"/></svg><div class="t" style="left:2371px;top:1060.30px;font-size:15px;line-height:15px;color:#1A6CD8;font-family:'Liberation Sans', sans-serif;font-weight:bold;"><span style="font-size:0.923em">英</span></div><svg style="left:2398px;top:1060px;" width="14" height="14" viewBox="0 0 14 14"><circle cx="3" cy="4" r="1.8" fill="#1A6CD8"/><path d="M10 7C11 9 10 12 8 13" fill="none" stroke="#1A6CD8" stroke-width="2"/></svg><svg style="left:2421px;top:1060px;" width="12" height="16" viewBox="0 0 12 16"><rect x="3" y="0" width="6" height="10" rx="3" fill="#1A6CD8"/><path d="M1 7A5 5 0 0 0 11 7M6 12V16" fill="none" stroke="#1A6CD8" stroke-width="1.5"/></svg><svg style="left:2444px;top:1061px;" width="16" height="13" viewBox="0 0 16 13"><rect x="0.5" y="0.5" width="15" height="12" rx="1" fill="none" stroke="#1A6CD8" stroke-width="1.5"/><path d="M3 4H13M3 7H13M5 10H11" stroke="#1A6CD8" stroke-width="1.3" stroke-dasharray="1.5 1"/></svg><svg style="left:2467px;top:1060px;" width="16" height="14" viewBox="0 0 16 14"><path d="M0 3L5 0H11L16 3L14 6L12 5V14H4V5L2 6Z" fill="#1A6CD8"/></svg><svg style="left:2490px;top:1061px;" width="17" height="13" viewBox="0 0 17 13"><rect x="0" y="2" width="17" height="11" rx="5.5" fill="#1A6CD8"/><circle cx="11" cy="7.5" r="1.8" fill="#FFFFFF"/><path d="M4 7.5H7M5.5 6V9" stroke="#FFFFFF" stroke-width="1.2"/><path d="M8.5 0V2" stroke="#1A6CD8" stroke-width="1.5"/></svg><svg style="left:2513px;top:1061px;" width="13" height="13" viewBox="0 0 13 13"><rect x="0" y="0" width="5.5" height="5.5" rx="1" fill="#1A6CD8"/><rect x="7.5" y="0" width="5.5" height="5.5" rx="1" fill="#1A6CD8"/><rect x="0" y="7.5" width="5.5" height="5.5" rx="1" fill="#1A6CD8"/><rect x="7.5" y="7.5" width="5.5" height="5.5" rx="1" fill="#1A6CD8"/></svg><svg style="left:2536px;top:1060px;" width="15" height="15" viewBox="0 0 15 15"><path d="M7.5 0L9.5 4H14L11 7.5L13 12L7.5 10L2 12L4 7.5L1 4H5.5Z" fill="none" stroke="#1A6CD8" stroke-width="1.6"/><circle cx="7.5" cy="7" r="1.8" fill="#1A6CD8"/></svg></body></html>
